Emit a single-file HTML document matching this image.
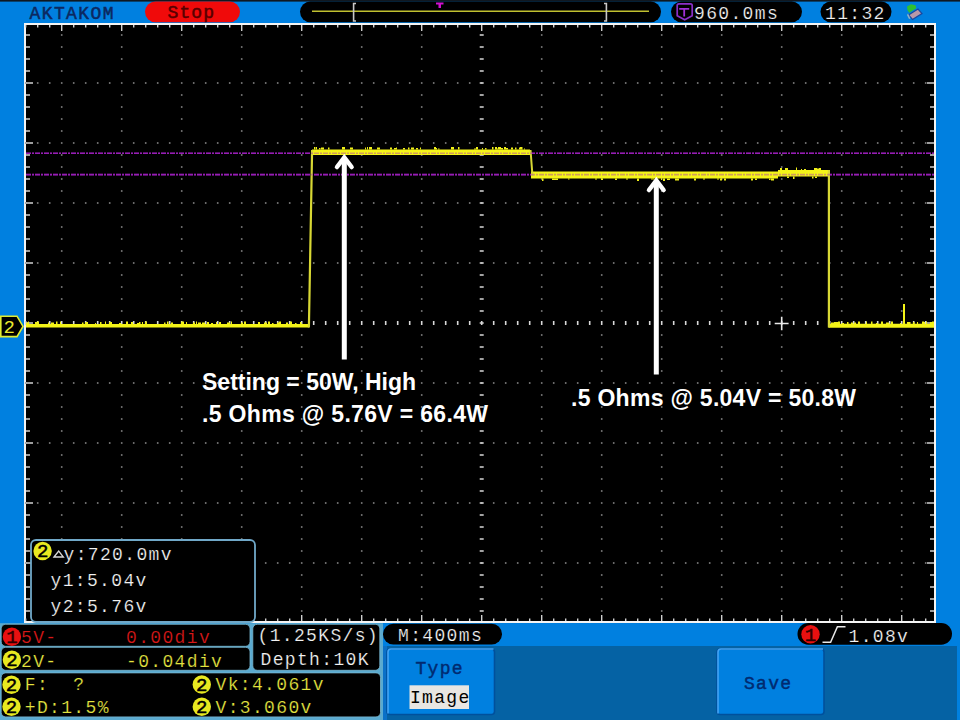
<!DOCTYPE html>
<html><head><meta charset="utf-8">
<style>
html,body{margin:0;padding:0;background:#0080e0;}
body{width:960px;height:720px;overflow:hidden;position:relative;}
svg{position:absolute;left:0;top:0;}
</style></head><body>
<svg width="960" height="720" viewBox="0 0 960 720">
<rect x="0" y="0" width="960" height="720" fill="#0080e0"/>
<rect x="0" y="0" width="960" height="1.6" fill="#101820"/>

<text x="29.5" y="18.75" font-family="Liberation Mono" font-size="18" letter-spacing="1.4" fill="#0c2860" stroke="#0c2860" stroke-width="0.5" xml:space="preserve">AKTAKOM</text>
<rect x="145" y="1.4" width="95" height="20.9" rx="10.45" fill="#f00a0a"/>
<text x="167.5" y="17.8" font-family="Liberation Mono" font-size="18" letter-spacing="1.1" fill="#580000" stroke="#580000" stroke-width="0.5" xml:space="preserve">Stop</text>
<rect x="300" y="1.4" width="361" height="20.9" rx="10.45" fill="#000"/>
<rect x="312" y="10.5" width="337" height="1.5" fill="#c0c030"/>
<path d="M356 3.5h-2.4v17.5h2.4" stroke="#c8c8c8" stroke-width="1.6" fill="none"/>
<path d="M604 3.5h2.4v17.5h-2.4" stroke="#c8c8c8" stroke-width="1.6" fill="none"/>
<path d="M436 2.5h7.5v2h-2.5v3.5h-2.5v-3.5h-2.5z" fill="#d010d0"/>
<rect x="671" y="1.4" width="131" height="20.9" rx="10.45" fill="#000"/>
<path d="M677.2 5.5q0-1.7 1.7-1.7h11.6q1.7 0 1.7 1.7v10.3l-7.5 4l-7.5-4z" fill="none" stroke="#8a30c8" stroke-width="1.7"/>
<path d="M679.2 7.9h10v1.8h-4.1v6.8h-1.8v-6.8h-4.1z" fill="#a030d8"/>
<text x="694" y="18.75" font-family="Liberation Mono" font-size="18" letter-spacing="1.35" fill="#f2f2f2" stroke="#000" stroke-width="0.2" xml:space="preserve">960.0ms</text>
<rect x="820.5" y="1.4" width="71" height="20.9" rx="10.45" fill="#000"/>
<text x="825" y="18.75" font-family="Liberation Mono" font-size="18" letter-spacing="1.35" fill="#f2f2f2" stroke="#000" stroke-width="0.2" xml:space="preserve">11:32</text>
<path d="M908.5 15l9.5-6l4 4.5l-9.5 6z" fill="#b898a8" stroke="#1848a0" stroke-width="1.2"/><path d="M907 6.5l4-2.3l4.5 1l0.8 3l-4 2.5l-3 2l-1.8-2.5z" fill="#30c030"/><path d="M908 13.5l2.5 5l-1.5 0.5l-2-4z" fill="#90b0c8"/>
<rect x="24" y="23" width="912" height="600" fill="#f4f4f4"/>
<rect x="26" y="25" width="908" height="596" fill="#000"/>
<path d="M24.9 82.2h1.6v1.6h-1.6zM36.9 82.2h1.6v1.6h-1.6zM48.9 82.2h1.6v1.6h-1.6zM60.9 82.2h1.6v1.6h-1.6zM72.9 82.2h1.6v1.6h-1.6zM84.9 82.2h1.6v1.6h-1.6zM96.9 82.2h1.6v1.6h-1.6zM108.9 82.2h1.6v1.6h-1.6zM120.9 82.2h1.6v1.6h-1.6zM132.9 82.2h1.6v1.6h-1.6zM144.9 82.2h1.6v1.6h-1.6zM156.9 82.2h1.6v1.6h-1.6zM168.9 82.2h1.6v1.6h-1.6zM180.9 82.2h1.6v1.6h-1.6zM192.9 82.2h1.6v1.6h-1.6zM204.9 82.2h1.6v1.6h-1.6zM216.9 82.2h1.6v1.6h-1.6zM228.9 82.2h1.6v1.6h-1.6zM240.9 82.2h1.6v1.6h-1.6zM252.9 82.2h1.6v1.6h-1.6zM264.9 82.2h1.6v1.6h-1.6zM276.9 82.2h1.6v1.6h-1.6zM288.9 82.2h1.6v1.6h-1.6zM300.9 82.2h1.6v1.6h-1.6zM312.9 82.2h1.6v1.6h-1.6zM324.9 82.2h1.6v1.6h-1.6zM336.9 82.2h1.6v1.6h-1.6zM348.9 82.2h1.6v1.6h-1.6zM360.9 82.2h1.6v1.6h-1.6zM372.9 82.2h1.6v1.6h-1.6zM384.9 82.2h1.6v1.6h-1.6zM396.9 82.2h1.6v1.6h-1.6zM408.9 82.2h1.6v1.6h-1.6zM420.9 82.2h1.6v1.6h-1.6zM432.9 82.2h1.6v1.6h-1.6zM444.9 82.2h1.6v1.6h-1.6zM456.9 82.2h1.6v1.6h-1.6zM468.9 82.2h1.6v1.6h-1.6zM480.9 82.2h1.6v1.6h-1.6zM492.9 82.2h1.6v1.6h-1.6zM504.9 82.2h1.6v1.6h-1.6zM516.9 82.2h1.6v1.6h-1.6zM528.9 82.2h1.6v1.6h-1.6zM540.9 82.2h1.6v1.6h-1.6zM552.9 82.2h1.6v1.6h-1.6zM564.9 82.2h1.6v1.6h-1.6zM576.9 82.2h1.6v1.6h-1.6zM588.9 82.2h1.6v1.6h-1.6zM600.9 82.2h1.6v1.6h-1.6zM612.9 82.2h1.6v1.6h-1.6zM624.9 82.2h1.6v1.6h-1.6zM636.9 82.2h1.6v1.6h-1.6zM648.9 82.2h1.6v1.6h-1.6zM660.9 82.2h1.6v1.6h-1.6zM672.9 82.2h1.6v1.6h-1.6zM684.9 82.2h1.6v1.6h-1.6zM696.9 82.2h1.6v1.6h-1.6zM708.9 82.2h1.6v1.6h-1.6zM720.9 82.2h1.6v1.6h-1.6zM732.9 82.2h1.6v1.6h-1.6zM744.9 82.2h1.6v1.6h-1.6zM756.9 82.2h1.6v1.6h-1.6zM768.9 82.2h1.6v1.6h-1.6zM780.9 82.2h1.6v1.6h-1.6zM792.9 82.2h1.6v1.6h-1.6zM804.9 82.2h1.6v1.6h-1.6zM816.9 82.2h1.6v1.6h-1.6zM828.9 82.2h1.6v1.6h-1.6zM840.9 82.2h1.6v1.6h-1.6zM852.9 82.2h1.6v1.6h-1.6zM864.9 82.2h1.6v1.6h-1.6zM876.9 82.2h1.6v1.6h-1.6zM888.9 82.2h1.6v1.6h-1.6zM900.9 82.2h1.6v1.6h-1.6zM912.9 82.2h1.6v1.6h-1.6zM924.9 82.2h1.6v1.6h-1.6zM24.9 142.2h1.6v1.6h-1.6zM36.9 142.2h1.6v1.6h-1.6zM48.9 142.2h1.6v1.6h-1.6zM60.9 142.2h1.6v1.6h-1.6zM72.9 142.2h1.6v1.6h-1.6zM84.9 142.2h1.6v1.6h-1.6zM96.9 142.2h1.6v1.6h-1.6zM108.9 142.2h1.6v1.6h-1.6zM120.9 142.2h1.6v1.6h-1.6zM132.9 142.2h1.6v1.6h-1.6zM144.9 142.2h1.6v1.6h-1.6zM156.9 142.2h1.6v1.6h-1.6zM168.9 142.2h1.6v1.6h-1.6zM180.9 142.2h1.6v1.6h-1.6zM192.9 142.2h1.6v1.6h-1.6zM204.9 142.2h1.6v1.6h-1.6zM216.9 142.2h1.6v1.6h-1.6zM228.9 142.2h1.6v1.6h-1.6zM240.9 142.2h1.6v1.6h-1.6zM252.9 142.2h1.6v1.6h-1.6zM264.9 142.2h1.6v1.6h-1.6zM276.9 142.2h1.6v1.6h-1.6zM288.9 142.2h1.6v1.6h-1.6zM300.9 142.2h1.6v1.6h-1.6zM312.9 142.2h1.6v1.6h-1.6zM324.9 142.2h1.6v1.6h-1.6zM336.9 142.2h1.6v1.6h-1.6zM348.9 142.2h1.6v1.6h-1.6zM360.9 142.2h1.6v1.6h-1.6zM372.9 142.2h1.6v1.6h-1.6zM384.9 142.2h1.6v1.6h-1.6zM396.9 142.2h1.6v1.6h-1.6zM408.9 142.2h1.6v1.6h-1.6zM420.9 142.2h1.6v1.6h-1.6zM432.9 142.2h1.6v1.6h-1.6zM444.9 142.2h1.6v1.6h-1.6zM456.9 142.2h1.6v1.6h-1.6zM468.9 142.2h1.6v1.6h-1.6zM480.9 142.2h1.6v1.6h-1.6zM492.9 142.2h1.6v1.6h-1.6zM504.9 142.2h1.6v1.6h-1.6zM516.9 142.2h1.6v1.6h-1.6zM528.9 142.2h1.6v1.6h-1.6zM540.9 142.2h1.6v1.6h-1.6zM552.9 142.2h1.6v1.6h-1.6zM564.9 142.2h1.6v1.6h-1.6zM576.9 142.2h1.6v1.6h-1.6zM588.9 142.2h1.6v1.6h-1.6zM600.9 142.2h1.6v1.6h-1.6zM612.9 142.2h1.6v1.6h-1.6zM624.9 142.2h1.6v1.6h-1.6zM636.9 142.2h1.6v1.6h-1.6zM648.9 142.2h1.6v1.6h-1.6zM660.9 142.2h1.6v1.6h-1.6zM672.9 142.2h1.6v1.6h-1.6zM684.9 142.2h1.6v1.6h-1.6zM696.9 142.2h1.6v1.6h-1.6zM708.9 142.2h1.6v1.6h-1.6zM720.9 142.2h1.6v1.6h-1.6zM732.9 142.2h1.6v1.6h-1.6zM744.9 142.2h1.6v1.6h-1.6zM756.9 142.2h1.6v1.6h-1.6zM768.9 142.2h1.6v1.6h-1.6zM780.9 142.2h1.6v1.6h-1.6zM792.9 142.2h1.6v1.6h-1.6zM804.9 142.2h1.6v1.6h-1.6zM816.9 142.2h1.6v1.6h-1.6zM828.9 142.2h1.6v1.6h-1.6zM840.9 142.2h1.6v1.6h-1.6zM852.9 142.2h1.6v1.6h-1.6zM864.9 142.2h1.6v1.6h-1.6zM876.9 142.2h1.6v1.6h-1.6zM888.9 142.2h1.6v1.6h-1.6zM900.9 142.2h1.6v1.6h-1.6zM912.9 142.2h1.6v1.6h-1.6zM924.9 142.2h1.6v1.6h-1.6zM24.9 202.2h1.6v1.6h-1.6zM36.9 202.2h1.6v1.6h-1.6zM48.9 202.2h1.6v1.6h-1.6zM60.9 202.2h1.6v1.6h-1.6zM72.9 202.2h1.6v1.6h-1.6zM84.9 202.2h1.6v1.6h-1.6zM96.9 202.2h1.6v1.6h-1.6zM108.9 202.2h1.6v1.6h-1.6zM120.9 202.2h1.6v1.6h-1.6zM132.9 202.2h1.6v1.6h-1.6zM144.9 202.2h1.6v1.6h-1.6zM156.9 202.2h1.6v1.6h-1.6zM168.9 202.2h1.6v1.6h-1.6zM180.9 202.2h1.6v1.6h-1.6zM192.9 202.2h1.6v1.6h-1.6zM204.9 202.2h1.6v1.6h-1.6zM216.9 202.2h1.6v1.6h-1.6zM228.9 202.2h1.6v1.6h-1.6zM240.9 202.2h1.6v1.6h-1.6zM252.9 202.2h1.6v1.6h-1.6zM264.9 202.2h1.6v1.6h-1.6zM276.9 202.2h1.6v1.6h-1.6zM288.9 202.2h1.6v1.6h-1.6zM300.9 202.2h1.6v1.6h-1.6zM312.9 202.2h1.6v1.6h-1.6zM324.9 202.2h1.6v1.6h-1.6zM336.9 202.2h1.6v1.6h-1.6zM348.9 202.2h1.6v1.6h-1.6zM360.9 202.2h1.6v1.6h-1.6zM372.9 202.2h1.6v1.6h-1.6zM384.9 202.2h1.6v1.6h-1.6zM396.9 202.2h1.6v1.6h-1.6zM408.9 202.2h1.6v1.6h-1.6zM420.9 202.2h1.6v1.6h-1.6zM432.9 202.2h1.6v1.6h-1.6zM444.9 202.2h1.6v1.6h-1.6zM456.9 202.2h1.6v1.6h-1.6zM468.9 202.2h1.6v1.6h-1.6zM480.9 202.2h1.6v1.6h-1.6zM492.9 202.2h1.6v1.6h-1.6zM504.9 202.2h1.6v1.6h-1.6zM516.9 202.2h1.6v1.6h-1.6zM528.9 202.2h1.6v1.6h-1.6zM540.9 202.2h1.6v1.6h-1.6zM552.9 202.2h1.6v1.6h-1.6zM564.9 202.2h1.6v1.6h-1.6zM576.9 202.2h1.6v1.6h-1.6zM588.9 202.2h1.6v1.6h-1.6zM600.9 202.2h1.6v1.6h-1.6zM612.9 202.2h1.6v1.6h-1.6zM624.9 202.2h1.6v1.6h-1.6zM636.9 202.2h1.6v1.6h-1.6zM648.9 202.2h1.6v1.6h-1.6zM660.9 202.2h1.6v1.6h-1.6zM672.9 202.2h1.6v1.6h-1.6zM684.9 202.2h1.6v1.6h-1.6zM696.9 202.2h1.6v1.6h-1.6zM708.9 202.2h1.6v1.6h-1.6zM720.9 202.2h1.6v1.6h-1.6zM732.9 202.2h1.6v1.6h-1.6zM744.9 202.2h1.6v1.6h-1.6zM756.9 202.2h1.6v1.6h-1.6zM768.9 202.2h1.6v1.6h-1.6zM780.9 202.2h1.6v1.6h-1.6zM792.9 202.2h1.6v1.6h-1.6zM804.9 202.2h1.6v1.6h-1.6zM816.9 202.2h1.6v1.6h-1.6zM828.9 202.2h1.6v1.6h-1.6zM840.9 202.2h1.6v1.6h-1.6zM852.9 202.2h1.6v1.6h-1.6zM864.9 202.2h1.6v1.6h-1.6zM876.9 202.2h1.6v1.6h-1.6zM888.9 202.2h1.6v1.6h-1.6zM900.9 202.2h1.6v1.6h-1.6zM912.9 202.2h1.6v1.6h-1.6zM924.9 202.2h1.6v1.6h-1.6zM24.9 262.2h1.6v1.6h-1.6zM36.9 262.2h1.6v1.6h-1.6zM48.9 262.2h1.6v1.6h-1.6zM60.9 262.2h1.6v1.6h-1.6zM72.9 262.2h1.6v1.6h-1.6zM84.9 262.2h1.6v1.6h-1.6zM96.9 262.2h1.6v1.6h-1.6zM108.9 262.2h1.6v1.6h-1.6zM120.9 262.2h1.6v1.6h-1.6zM132.9 262.2h1.6v1.6h-1.6zM144.9 262.2h1.6v1.6h-1.6zM156.9 262.2h1.6v1.6h-1.6zM168.9 262.2h1.6v1.6h-1.6zM180.9 262.2h1.6v1.6h-1.6zM192.9 262.2h1.6v1.6h-1.6zM204.9 262.2h1.6v1.6h-1.6zM216.9 262.2h1.6v1.6h-1.6zM228.9 262.2h1.6v1.6h-1.6zM240.9 262.2h1.6v1.6h-1.6zM252.9 262.2h1.6v1.6h-1.6zM264.9 262.2h1.6v1.6h-1.6zM276.9 262.2h1.6v1.6h-1.6zM288.9 262.2h1.6v1.6h-1.6zM300.9 262.2h1.6v1.6h-1.6zM312.9 262.2h1.6v1.6h-1.6zM324.9 262.2h1.6v1.6h-1.6zM336.9 262.2h1.6v1.6h-1.6zM348.9 262.2h1.6v1.6h-1.6zM360.9 262.2h1.6v1.6h-1.6zM372.9 262.2h1.6v1.6h-1.6zM384.9 262.2h1.6v1.6h-1.6zM396.9 262.2h1.6v1.6h-1.6zM408.9 262.2h1.6v1.6h-1.6zM420.9 262.2h1.6v1.6h-1.6zM432.9 262.2h1.6v1.6h-1.6zM444.9 262.2h1.6v1.6h-1.6zM456.9 262.2h1.6v1.6h-1.6zM468.9 262.2h1.6v1.6h-1.6zM480.9 262.2h1.6v1.6h-1.6zM492.9 262.2h1.6v1.6h-1.6zM504.9 262.2h1.6v1.6h-1.6zM516.9 262.2h1.6v1.6h-1.6zM528.9 262.2h1.6v1.6h-1.6zM540.9 262.2h1.6v1.6h-1.6zM552.9 262.2h1.6v1.6h-1.6zM564.9 262.2h1.6v1.6h-1.6zM576.9 262.2h1.6v1.6h-1.6zM588.9 262.2h1.6v1.6h-1.6zM600.9 262.2h1.6v1.6h-1.6zM612.9 262.2h1.6v1.6h-1.6zM624.9 262.2h1.6v1.6h-1.6zM636.9 262.2h1.6v1.6h-1.6zM648.9 262.2h1.6v1.6h-1.6zM660.9 262.2h1.6v1.6h-1.6zM672.9 262.2h1.6v1.6h-1.6zM684.9 262.2h1.6v1.6h-1.6zM696.9 262.2h1.6v1.6h-1.6zM708.9 262.2h1.6v1.6h-1.6zM720.9 262.2h1.6v1.6h-1.6zM732.9 262.2h1.6v1.6h-1.6zM744.9 262.2h1.6v1.6h-1.6zM756.9 262.2h1.6v1.6h-1.6zM768.9 262.2h1.6v1.6h-1.6zM780.9 262.2h1.6v1.6h-1.6zM792.9 262.2h1.6v1.6h-1.6zM804.9 262.2h1.6v1.6h-1.6zM816.9 262.2h1.6v1.6h-1.6zM828.9 262.2h1.6v1.6h-1.6zM840.9 262.2h1.6v1.6h-1.6zM852.9 262.2h1.6v1.6h-1.6zM864.9 262.2h1.6v1.6h-1.6zM876.9 262.2h1.6v1.6h-1.6zM888.9 262.2h1.6v1.6h-1.6zM900.9 262.2h1.6v1.6h-1.6zM912.9 262.2h1.6v1.6h-1.6zM924.9 262.2h1.6v1.6h-1.6zM24.9 382.2h1.6v1.6h-1.6zM36.9 382.2h1.6v1.6h-1.6zM48.9 382.2h1.6v1.6h-1.6zM60.9 382.2h1.6v1.6h-1.6zM72.9 382.2h1.6v1.6h-1.6zM84.9 382.2h1.6v1.6h-1.6zM96.9 382.2h1.6v1.6h-1.6zM108.9 382.2h1.6v1.6h-1.6zM120.9 382.2h1.6v1.6h-1.6zM132.9 382.2h1.6v1.6h-1.6zM144.9 382.2h1.6v1.6h-1.6zM156.9 382.2h1.6v1.6h-1.6zM168.9 382.2h1.6v1.6h-1.6zM180.9 382.2h1.6v1.6h-1.6zM192.9 382.2h1.6v1.6h-1.6zM204.9 382.2h1.6v1.6h-1.6zM216.9 382.2h1.6v1.6h-1.6zM228.9 382.2h1.6v1.6h-1.6zM240.9 382.2h1.6v1.6h-1.6zM252.9 382.2h1.6v1.6h-1.6zM264.9 382.2h1.6v1.6h-1.6zM276.9 382.2h1.6v1.6h-1.6zM288.9 382.2h1.6v1.6h-1.6zM300.9 382.2h1.6v1.6h-1.6zM312.9 382.2h1.6v1.6h-1.6zM324.9 382.2h1.6v1.6h-1.6zM336.9 382.2h1.6v1.6h-1.6zM348.9 382.2h1.6v1.6h-1.6zM360.9 382.2h1.6v1.6h-1.6zM372.9 382.2h1.6v1.6h-1.6zM384.9 382.2h1.6v1.6h-1.6zM396.9 382.2h1.6v1.6h-1.6zM408.9 382.2h1.6v1.6h-1.6zM420.9 382.2h1.6v1.6h-1.6zM432.9 382.2h1.6v1.6h-1.6zM444.9 382.2h1.6v1.6h-1.6zM456.9 382.2h1.6v1.6h-1.6zM468.9 382.2h1.6v1.6h-1.6zM480.9 382.2h1.6v1.6h-1.6zM492.9 382.2h1.6v1.6h-1.6zM504.9 382.2h1.6v1.6h-1.6zM516.9 382.2h1.6v1.6h-1.6zM528.9 382.2h1.6v1.6h-1.6zM540.9 382.2h1.6v1.6h-1.6zM552.9 382.2h1.6v1.6h-1.6zM564.9 382.2h1.6v1.6h-1.6zM576.9 382.2h1.6v1.6h-1.6zM588.9 382.2h1.6v1.6h-1.6zM600.9 382.2h1.6v1.6h-1.6zM612.9 382.2h1.6v1.6h-1.6zM624.9 382.2h1.6v1.6h-1.6zM636.9 382.2h1.6v1.6h-1.6zM648.9 382.2h1.6v1.6h-1.6zM660.9 382.2h1.6v1.6h-1.6zM672.9 382.2h1.6v1.6h-1.6zM684.9 382.2h1.6v1.6h-1.6zM696.9 382.2h1.6v1.6h-1.6zM708.9 382.2h1.6v1.6h-1.6zM720.9 382.2h1.6v1.6h-1.6zM732.9 382.2h1.6v1.6h-1.6zM744.9 382.2h1.6v1.6h-1.6zM756.9 382.2h1.6v1.6h-1.6zM768.9 382.2h1.6v1.6h-1.6zM780.9 382.2h1.6v1.6h-1.6zM792.9 382.2h1.6v1.6h-1.6zM804.9 382.2h1.6v1.6h-1.6zM816.9 382.2h1.6v1.6h-1.6zM828.9 382.2h1.6v1.6h-1.6zM840.9 382.2h1.6v1.6h-1.6zM852.9 382.2h1.6v1.6h-1.6zM864.9 382.2h1.6v1.6h-1.6zM876.9 382.2h1.6v1.6h-1.6zM888.9 382.2h1.6v1.6h-1.6zM900.9 382.2h1.6v1.6h-1.6zM912.9 382.2h1.6v1.6h-1.6zM924.9 382.2h1.6v1.6h-1.6zM24.9 442.2h1.6v1.6h-1.6zM36.9 442.2h1.6v1.6h-1.6zM48.9 442.2h1.6v1.6h-1.6zM60.9 442.2h1.6v1.6h-1.6zM72.9 442.2h1.6v1.6h-1.6zM84.9 442.2h1.6v1.6h-1.6zM96.9 442.2h1.6v1.6h-1.6zM108.9 442.2h1.6v1.6h-1.6zM120.9 442.2h1.6v1.6h-1.6zM132.9 442.2h1.6v1.6h-1.6zM144.9 442.2h1.6v1.6h-1.6zM156.9 442.2h1.6v1.6h-1.6zM168.9 442.2h1.6v1.6h-1.6zM180.9 442.2h1.6v1.6h-1.6zM192.9 442.2h1.6v1.6h-1.6zM204.9 442.2h1.6v1.6h-1.6zM216.9 442.2h1.6v1.6h-1.6zM228.9 442.2h1.6v1.6h-1.6zM240.9 442.2h1.6v1.6h-1.6zM252.9 442.2h1.6v1.6h-1.6zM264.9 442.2h1.6v1.6h-1.6zM276.9 442.2h1.6v1.6h-1.6zM288.9 442.2h1.6v1.6h-1.6zM300.9 442.2h1.6v1.6h-1.6zM312.9 442.2h1.6v1.6h-1.6zM324.9 442.2h1.6v1.6h-1.6zM336.9 442.2h1.6v1.6h-1.6zM348.9 442.2h1.6v1.6h-1.6zM360.9 442.2h1.6v1.6h-1.6zM372.9 442.2h1.6v1.6h-1.6zM384.9 442.2h1.6v1.6h-1.6zM396.9 442.2h1.6v1.6h-1.6zM408.9 442.2h1.6v1.6h-1.6zM420.9 442.2h1.6v1.6h-1.6zM432.9 442.2h1.6v1.6h-1.6zM444.9 442.2h1.6v1.6h-1.6zM456.9 442.2h1.6v1.6h-1.6zM468.9 442.2h1.6v1.6h-1.6zM480.9 442.2h1.6v1.6h-1.6zM492.9 442.2h1.6v1.6h-1.6zM504.9 442.2h1.6v1.6h-1.6zM516.9 442.2h1.6v1.6h-1.6zM528.9 442.2h1.6v1.6h-1.6zM540.9 442.2h1.6v1.6h-1.6zM552.9 442.2h1.6v1.6h-1.6zM564.9 442.2h1.6v1.6h-1.6zM576.9 442.2h1.6v1.6h-1.6zM588.9 442.2h1.6v1.6h-1.6zM600.9 442.2h1.6v1.6h-1.6zM612.9 442.2h1.6v1.6h-1.6zM624.9 442.2h1.6v1.6h-1.6zM636.9 442.2h1.6v1.6h-1.6zM648.9 442.2h1.6v1.6h-1.6zM660.9 442.2h1.6v1.6h-1.6zM672.9 442.2h1.6v1.6h-1.6zM684.9 442.2h1.6v1.6h-1.6zM696.9 442.2h1.6v1.6h-1.6zM708.9 442.2h1.6v1.6h-1.6zM720.9 442.2h1.6v1.6h-1.6zM732.9 442.2h1.6v1.6h-1.6zM744.9 442.2h1.6v1.6h-1.6zM756.9 442.2h1.6v1.6h-1.6zM768.9 442.2h1.6v1.6h-1.6zM780.9 442.2h1.6v1.6h-1.6zM792.9 442.2h1.6v1.6h-1.6zM804.9 442.2h1.6v1.6h-1.6zM816.9 442.2h1.6v1.6h-1.6zM828.9 442.2h1.6v1.6h-1.6zM840.9 442.2h1.6v1.6h-1.6zM852.9 442.2h1.6v1.6h-1.6zM864.9 442.2h1.6v1.6h-1.6zM876.9 442.2h1.6v1.6h-1.6zM888.9 442.2h1.6v1.6h-1.6zM900.9 442.2h1.6v1.6h-1.6zM912.9 442.2h1.6v1.6h-1.6zM924.9 442.2h1.6v1.6h-1.6zM24.9 502.2h1.6v1.6h-1.6zM36.9 502.2h1.6v1.6h-1.6zM48.9 502.2h1.6v1.6h-1.6zM60.9 502.2h1.6v1.6h-1.6zM72.9 502.2h1.6v1.6h-1.6zM84.9 502.2h1.6v1.6h-1.6zM96.9 502.2h1.6v1.6h-1.6zM108.9 502.2h1.6v1.6h-1.6zM120.9 502.2h1.6v1.6h-1.6zM132.9 502.2h1.6v1.6h-1.6zM144.9 502.2h1.6v1.6h-1.6zM156.9 502.2h1.6v1.6h-1.6zM168.9 502.2h1.6v1.6h-1.6zM180.9 502.2h1.6v1.6h-1.6zM192.9 502.2h1.6v1.6h-1.6zM204.9 502.2h1.6v1.6h-1.6zM216.9 502.2h1.6v1.6h-1.6zM228.9 502.2h1.6v1.6h-1.6zM240.9 502.2h1.6v1.6h-1.6zM252.9 502.2h1.6v1.6h-1.6zM264.9 502.2h1.6v1.6h-1.6zM276.9 502.2h1.6v1.6h-1.6zM288.9 502.2h1.6v1.6h-1.6zM300.9 502.2h1.6v1.6h-1.6zM312.9 502.2h1.6v1.6h-1.6zM324.9 502.2h1.6v1.6h-1.6zM336.9 502.2h1.6v1.6h-1.6zM348.9 502.2h1.6v1.6h-1.6zM360.9 502.2h1.6v1.6h-1.6zM372.9 502.2h1.6v1.6h-1.6zM384.9 502.2h1.6v1.6h-1.6zM396.9 502.2h1.6v1.6h-1.6zM408.9 502.2h1.6v1.6h-1.6zM420.9 502.2h1.6v1.6h-1.6zM432.9 502.2h1.6v1.6h-1.6zM444.9 502.2h1.6v1.6h-1.6zM456.9 502.2h1.6v1.6h-1.6zM468.9 502.2h1.6v1.6h-1.6zM480.9 502.2h1.6v1.6h-1.6zM492.9 502.2h1.6v1.6h-1.6zM504.9 502.2h1.6v1.6h-1.6zM516.9 502.2h1.6v1.6h-1.6zM528.9 502.2h1.6v1.6h-1.6zM540.9 502.2h1.6v1.6h-1.6zM552.9 502.2h1.6v1.6h-1.6zM564.9 502.2h1.6v1.6h-1.6zM576.9 502.2h1.6v1.6h-1.6zM588.9 502.2h1.6v1.6h-1.6zM600.9 502.2h1.6v1.6h-1.6zM612.9 502.2h1.6v1.6h-1.6zM624.9 502.2h1.6v1.6h-1.6zM636.9 502.2h1.6v1.6h-1.6zM648.9 502.2h1.6v1.6h-1.6zM660.9 502.2h1.6v1.6h-1.6zM672.9 502.2h1.6v1.6h-1.6zM684.9 502.2h1.6v1.6h-1.6zM696.9 502.2h1.6v1.6h-1.6zM708.9 502.2h1.6v1.6h-1.6zM720.9 502.2h1.6v1.6h-1.6zM732.9 502.2h1.6v1.6h-1.6zM744.9 502.2h1.6v1.6h-1.6zM756.9 502.2h1.6v1.6h-1.6zM768.9 502.2h1.6v1.6h-1.6zM780.9 502.2h1.6v1.6h-1.6zM792.9 502.2h1.6v1.6h-1.6zM804.9 502.2h1.6v1.6h-1.6zM816.9 502.2h1.6v1.6h-1.6zM828.9 502.2h1.6v1.6h-1.6zM840.9 502.2h1.6v1.6h-1.6zM852.9 502.2h1.6v1.6h-1.6zM864.9 502.2h1.6v1.6h-1.6zM876.9 502.2h1.6v1.6h-1.6zM888.9 502.2h1.6v1.6h-1.6zM900.9 502.2h1.6v1.6h-1.6zM912.9 502.2h1.6v1.6h-1.6zM924.9 502.2h1.6v1.6h-1.6zM24.9 562.2h1.6v1.6h-1.6zM36.9 562.2h1.6v1.6h-1.6zM48.9 562.2h1.6v1.6h-1.6zM60.9 562.2h1.6v1.6h-1.6zM72.9 562.2h1.6v1.6h-1.6zM84.9 562.2h1.6v1.6h-1.6zM96.9 562.2h1.6v1.6h-1.6zM108.9 562.2h1.6v1.6h-1.6zM120.9 562.2h1.6v1.6h-1.6zM132.9 562.2h1.6v1.6h-1.6zM144.9 562.2h1.6v1.6h-1.6zM156.9 562.2h1.6v1.6h-1.6zM168.9 562.2h1.6v1.6h-1.6zM180.9 562.2h1.6v1.6h-1.6zM192.9 562.2h1.6v1.6h-1.6zM204.9 562.2h1.6v1.6h-1.6zM216.9 562.2h1.6v1.6h-1.6zM228.9 562.2h1.6v1.6h-1.6zM240.9 562.2h1.6v1.6h-1.6zM252.9 562.2h1.6v1.6h-1.6zM264.9 562.2h1.6v1.6h-1.6zM276.9 562.2h1.6v1.6h-1.6zM288.9 562.2h1.6v1.6h-1.6zM300.9 562.2h1.6v1.6h-1.6zM312.9 562.2h1.6v1.6h-1.6zM324.9 562.2h1.6v1.6h-1.6zM336.9 562.2h1.6v1.6h-1.6zM348.9 562.2h1.6v1.6h-1.6zM360.9 562.2h1.6v1.6h-1.6zM372.9 562.2h1.6v1.6h-1.6zM384.9 562.2h1.6v1.6h-1.6zM396.9 562.2h1.6v1.6h-1.6zM408.9 562.2h1.6v1.6h-1.6zM420.9 562.2h1.6v1.6h-1.6zM432.9 562.2h1.6v1.6h-1.6zM444.9 562.2h1.6v1.6h-1.6zM456.9 562.2h1.6v1.6h-1.6zM468.9 562.2h1.6v1.6h-1.6zM480.9 562.2h1.6v1.6h-1.6zM492.9 562.2h1.6v1.6h-1.6zM504.9 562.2h1.6v1.6h-1.6zM516.9 562.2h1.6v1.6h-1.6zM528.9 562.2h1.6v1.6h-1.6zM540.9 562.2h1.6v1.6h-1.6zM552.9 562.2h1.6v1.6h-1.6zM564.9 562.2h1.6v1.6h-1.6zM576.9 562.2h1.6v1.6h-1.6zM588.9 562.2h1.6v1.6h-1.6zM600.9 562.2h1.6v1.6h-1.6zM612.9 562.2h1.6v1.6h-1.6zM624.9 562.2h1.6v1.6h-1.6zM636.9 562.2h1.6v1.6h-1.6zM648.9 562.2h1.6v1.6h-1.6zM660.9 562.2h1.6v1.6h-1.6zM672.9 562.2h1.6v1.6h-1.6zM684.9 562.2h1.6v1.6h-1.6zM696.9 562.2h1.6v1.6h-1.6zM708.9 562.2h1.6v1.6h-1.6zM720.9 562.2h1.6v1.6h-1.6zM732.9 562.2h1.6v1.6h-1.6zM744.9 562.2h1.6v1.6h-1.6zM756.9 562.2h1.6v1.6h-1.6zM768.9 562.2h1.6v1.6h-1.6zM780.9 562.2h1.6v1.6h-1.6zM792.9 562.2h1.6v1.6h-1.6zM804.9 562.2h1.6v1.6h-1.6zM816.9 562.2h1.6v1.6h-1.6zM828.9 562.2h1.6v1.6h-1.6zM840.9 562.2h1.6v1.6h-1.6zM852.9 562.2h1.6v1.6h-1.6zM864.9 562.2h1.6v1.6h-1.6zM876.9 562.2h1.6v1.6h-1.6zM888.9 562.2h1.6v1.6h-1.6zM900.9 562.2h1.6v1.6h-1.6zM912.9 562.2h1.6v1.6h-1.6zM924.9 562.2h1.6v1.6h-1.6zM60.9 34.2h1.6v1.6h-1.6zM60.9 46.2h1.6v1.6h-1.6zM60.9 58.2h1.6v1.6h-1.6zM60.9 70.2h1.6v1.6h-1.6zM60.9 94.2h1.6v1.6h-1.6zM60.9 106.2h1.6v1.6h-1.6zM60.9 118.2h1.6v1.6h-1.6zM60.9 130.2h1.6v1.6h-1.6zM60.9 154.2h1.6v1.6h-1.6zM60.9 166.2h1.6v1.6h-1.6zM60.9 178.2h1.6v1.6h-1.6zM60.9 190.2h1.6v1.6h-1.6zM60.9 214.2h1.6v1.6h-1.6zM60.9 226.2h1.6v1.6h-1.6zM60.9 238.2h1.6v1.6h-1.6zM60.9 250.2h1.6v1.6h-1.6zM60.9 274.2h1.6v1.6h-1.6zM60.9 286.2h1.6v1.6h-1.6zM60.9 298.2h1.6v1.6h-1.6zM60.9 310.2h1.6v1.6h-1.6zM60.9 334.2h1.6v1.6h-1.6zM60.9 346.2h1.6v1.6h-1.6zM60.9 358.2h1.6v1.6h-1.6zM60.9 370.2h1.6v1.6h-1.6zM60.9 394.2h1.6v1.6h-1.6zM60.9 406.2h1.6v1.6h-1.6zM60.9 418.2h1.6v1.6h-1.6zM60.9 430.2h1.6v1.6h-1.6zM60.9 454.2h1.6v1.6h-1.6zM60.9 466.2h1.6v1.6h-1.6zM60.9 478.2h1.6v1.6h-1.6zM60.9 490.2h1.6v1.6h-1.6zM60.9 514.2h1.6v1.6h-1.6zM60.9 526.2h1.6v1.6h-1.6zM60.9 538.2h1.6v1.6h-1.6zM60.9 550.2h1.6v1.6h-1.6zM60.9 574.2h1.6v1.6h-1.6zM60.9 586.2h1.6v1.6h-1.6zM60.9 598.2h1.6v1.6h-1.6zM60.9 610.2h1.6v1.6h-1.6zM120.9 34.2h1.6v1.6h-1.6zM120.9 46.2h1.6v1.6h-1.6zM120.9 58.2h1.6v1.6h-1.6zM120.9 70.2h1.6v1.6h-1.6zM120.9 94.2h1.6v1.6h-1.6zM120.9 106.2h1.6v1.6h-1.6zM120.9 118.2h1.6v1.6h-1.6zM120.9 130.2h1.6v1.6h-1.6zM120.9 154.2h1.6v1.6h-1.6zM120.9 166.2h1.6v1.6h-1.6zM120.9 178.2h1.6v1.6h-1.6zM120.9 190.2h1.6v1.6h-1.6zM120.9 214.2h1.6v1.6h-1.6zM120.9 226.2h1.6v1.6h-1.6zM120.9 238.2h1.6v1.6h-1.6zM120.9 250.2h1.6v1.6h-1.6zM120.9 274.2h1.6v1.6h-1.6zM120.9 286.2h1.6v1.6h-1.6zM120.9 298.2h1.6v1.6h-1.6zM120.9 310.2h1.6v1.6h-1.6zM120.9 334.2h1.6v1.6h-1.6zM120.9 346.2h1.6v1.6h-1.6zM120.9 358.2h1.6v1.6h-1.6zM120.9 370.2h1.6v1.6h-1.6zM120.9 394.2h1.6v1.6h-1.6zM120.9 406.2h1.6v1.6h-1.6zM120.9 418.2h1.6v1.6h-1.6zM120.9 430.2h1.6v1.6h-1.6zM120.9 454.2h1.6v1.6h-1.6zM120.9 466.2h1.6v1.6h-1.6zM120.9 478.2h1.6v1.6h-1.6zM120.9 490.2h1.6v1.6h-1.6zM120.9 514.2h1.6v1.6h-1.6zM120.9 526.2h1.6v1.6h-1.6zM120.9 538.2h1.6v1.6h-1.6zM120.9 550.2h1.6v1.6h-1.6zM120.9 574.2h1.6v1.6h-1.6zM120.9 586.2h1.6v1.6h-1.6zM120.9 598.2h1.6v1.6h-1.6zM120.9 610.2h1.6v1.6h-1.6zM180.9 34.2h1.6v1.6h-1.6zM180.9 46.2h1.6v1.6h-1.6zM180.9 58.2h1.6v1.6h-1.6zM180.9 70.2h1.6v1.6h-1.6zM180.9 94.2h1.6v1.6h-1.6zM180.9 106.2h1.6v1.6h-1.6zM180.9 118.2h1.6v1.6h-1.6zM180.9 130.2h1.6v1.6h-1.6zM180.9 154.2h1.6v1.6h-1.6zM180.9 166.2h1.6v1.6h-1.6zM180.9 178.2h1.6v1.6h-1.6zM180.9 190.2h1.6v1.6h-1.6zM180.9 214.2h1.6v1.6h-1.6zM180.9 226.2h1.6v1.6h-1.6zM180.9 238.2h1.6v1.6h-1.6zM180.9 250.2h1.6v1.6h-1.6zM180.9 274.2h1.6v1.6h-1.6zM180.9 286.2h1.6v1.6h-1.6zM180.9 298.2h1.6v1.6h-1.6zM180.9 310.2h1.6v1.6h-1.6zM180.9 334.2h1.6v1.6h-1.6zM180.9 346.2h1.6v1.6h-1.6zM180.9 358.2h1.6v1.6h-1.6zM180.9 370.2h1.6v1.6h-1.6zM180.9 394.2h1.6v1.6h-1.6zM180.9 406.2h1.6v1.6h-1.6zM180.9 418.2h1.6v1.6h-1.6zM180.9 430.2h1.6v1.6h-1.6zM180.9 454.2h1.6v1.6h-1.6zM180.9 466.2h1.6v1.6h-1.6zM180.9 478.2h1.6v1.6h-1.6zM180.9 490.2h1.6v1.6h-1.6zM180.9 514.2h1.6v1.6h-1.6zM180.9 526.2h1.6v1.6h-1.6zM180.9 538.2h1.6v1.6h-1.6zM180.9 550.2h1.6v1.6h-1.6zM180.9 574.2h1.6v1.6h-1.6zM180.9 586.2h1.6v1.6h-1.6zM180.9 598.2h1.6v1.6h-1.6zM180.9 610.2h1.6v1.6h-1.6zM240.9 34.2h1.6v1.6h-1.6zM240.9 46.2h1.6v1.6h-1.6zM240.9 58.2h1.6v1.6h-1.6zM240.9 70.2h1.6v1.6h-1.6zM240.9 94.2h1.6v1.6h-1.6zM240.9 106.2h1.6v1.6h-1.6zM240.9 118.2h1.6v1.6h-1.6zM240.9 130.2h1.6v1.6h-1.6zM240.9 154.2h1.6v1.6h-1.6zM240.9 166.2h1.6v1.6h-1.6zM240.9 178.2h1.6v1.6h-1.6zM240.9 190.2h1.6v1.6h-1.6zM240.9 214.2h1.6v1.6h-1.6zM240.9 226.2h1.6v1.6h-1.6zM240.9 238.2h1.6v1.6h-1.6zM240.9 250.2h1.6v1.6h-1.6zM240.9 274.2h1.6v1.6h-1.6zM240.9 286.2h1.6v1.6h-1.6zM240.9 298.2h1.6v1.6h-1.6zM240.9 310.2h1.6v1.6h-1.6zM240.9 334.2h1.6v1.6h-1.6zM240.9 346.2h1.6v1.6h-1.6zM240.9 358.2h1.6v1.6h-1.6zM240.9 370.2h1.6v1.6h-1.6zM240.9 394.2h1.6v1.6h-1.6zM240.9 406.2h1.6v1.6h-1.6zM240.9 418.2h1.6v1.6h-1.6zM240.9 430.2h1.6v1.6h-1.6zM240.9 454.2h1.6v1.6h-1.6zM240.9 466.2h1.6v1.6h-1.6zM240.9 478.2h1.6v1.6h-1.6zM240.9 490.2h1.6v1.6h-1.6zM240.9 514.2h1.6v1.6h-1.6zM240.9 526.2h1.6v1.6h-1.6zM240.9 538.2h1.6v1.6h-1.6zM240.9 550.2h1.6v1.6h-1.6zM240.9 574.2h1.6v1.6h-1.6zM240.9 586.2h1.6v1.6h-1.6zM240.9 598.2h1.6v1.6h-1.6zM240.9 610.2h1.6v1.6h-1.6zM300.9 34.2h1.6v1.6h-1.6zM300.9 46.2h1.6v1.6h-1.6zM300.9 58.2h1.6v1.6h-1.6zM300.9 70.2h1.6v1.6h-1.6zM300.9 94.2h1.6v1.6h-1.6zM300.9 106.2h1.6v1.6h-1.6zM300.9 118.2h1.6v1.6h-1.6zM300.9 130.2h1.6v1.6h-1.6zM300.9 154.2h1.6v1.6h-1.6zM300.9 166.2h1.6v1.6h-1.6zM300.9 178.2h1.6v1.6h-1.6zM300.9 190.2h1.6v1.6h-1.6zM300.9 214.2h1.6v1.6h-1.6zM300.9 226.2h1.6v1.6h-1.6zM300.9 238.2h1.6v1.6h-1.6zM300.9 250.2h1.6v1.6h-1.6zM300.9 274.2h1.6v1.6h-1.6zM300.9 286.2h1.6v1.6h-1.6zM300.9 298.2h1.6v1.6h-1.6zM300.9 310.2h1.6v1.6h-1.6zM300.9 334.2h1.6v1.6h-1.6zM300.9 346.2h1.6v1.6h-1.6zM300.9 358.2h1.6v1.6h-1.6zM300.9 370.2h1.6v1.6h-1.6zM300.9 394.2h1.6v1.6h-1.6zM300.9 406.2h1.6v1.6h-1.6zM300.9 418.2h1.6v1.6h-1.6zM300.9 430.2h1.6v1.6h-1.6zM300.9 454.2h1.6v1.6h-1.6zM300.9 466.2h1.6v1.6h-1.6zM300.9 478.2h1.6v1.6h-1.6zM300.9 490.2h1.6v1.6h-1.6zM300.9 514.2h1.6v1.6h-1.6zM300.9 526.2h1.6v1.6h-1.6zM300.9 538.2h1.6v1.6h-1.6zM300.9 550.2h1.6v1.6h-1.6zM300.9 574.2h1.6v1.6h-1.6zM300.9 586.2h1.6v1.6h-1.6zM300.9 598.2h1.6v1.6h-1.6zM300.9 610.2h1.6v1.6h-1.6zM360.9 34.2h1.6v1.6h-1.6zM360.9 46.2h1.6v1.6h-1.6zM360.9 58.2h1.6v1.6h-1.6zM360.9 70.2h1.6v1.6h-1.6zM360.9 94.2h1.6v1.6h-1.6zM360.9 106.2h1.6v1.6h-1.6zM360.9 118.2h1.6v1.6h-1.6zM360.9 130.2h1.6v1.6h-1.6zM360.9 154.2h1.6v1.6h-1.6zM360.9 166.2h1.6v1.6h-1.6zM360.9 178.2h1.6v1.6h-1.6zM360.9 190.2h1.6v1.6h-1.6zM360.9 214.2h1.6v1.6h-1.6zM360.9 226.2h1.6v1.6h-1.6zM360.9 238.2h1.6v1.6h-1.6zM360.9 250.2h1.6v1.6h-1.6zM360.9 274.2h1.6v1.6h-1.6zM360.9 286.2h1.6v1.6h-1.6zM360.9 298.2h1.6v1.6h-1.6zM360.9 310.2h1.6v1.6h-1.6zM360.9 334.2h1.6v1.6h-1.6zM360.9 346.2h1.6v1.6h-1.6zM360.9 358.2h1.6v1.6h-1.6zM360.9 370.2h1.6v1.6h-1.6zM360.9 394.2h1.6v1.6h-1.6zM360.9 406.2h1.6v1.6h-1.6zM360.9 418.2h1.6v1.6h-1.6zM360.9 430.2h1.6v1.6h-1.6zM360.9 454.2h1.6v1.6h-1.6zM360.9 466.2h1.6v1.6h-1.6zM360.9 478.2h1.6v1.6h-1.6zM360.9 490.2h1.6v1.6h-1.6zM360.9 514.2h1.6v1.6h-1.6zM360.9 526.2h1.6v1.6h-1.6zM360.9 538.2h1.6v1.6h-1.6zM360.9 550.2h1.6v1.6h-1.6zM360.9 574.2h1.6v1.6h-1.6zM360.9 586.2h1.6v1.6h-1.6zM360.9 598.2h1.6v1.6h-1.6zM360.9 610.2h1.6v1.6h-1.6zM420.9 34.2h1.6v1.6h-1.6zM420.9 46.2h1.6v1.6h-1.6zM420.9 58.2h1.6v1.6h-1.6zM420.9 70.2h1.6v1.6h-1.6zM420.9 94.2h1.6v1.6h-1.6zM420.9 106.2h1.6v1.6h-1.6zM420.9 118.2h1.6v1.6h-1.6zM420.9 130.2h1.6v1.6h-1.6zM420.9 154.2h1.6v1.6h-1.6zM420.9 166.2h1.6v1.6h-1.6zM420.9 178.2h1.6v1.6h-1.6zM420.9 190.2h1.6v1.6h-1.6zM420.9 214.2h1.6v1.6h-1.6zM420.9 226.2h1.6v1.6h-1.6zM420.9 238.2h1.6v1.6h-1.6zM420.9 250.2h1.6v1.6h-1.6zM420.9 274.2h1.6v1.6h-1.6zM420.9 286.2h1.6v1.6h-1.6zM420.9 298.2h1.6v1.6h-1.6zM420.9 310.2h1.6v1.6h-1.6zM420.9 334.2h1.6v1.6h-1.6zM420.9 346.2h1.6v1.6h-1.6zM420.9 358.2h1.6v1.6h-1.6zM420.9 370.2h1.6v1.6h-1.6zM420.9 394.2h1.6v1.6h-1.6zM420.9 406.2h1.6v1.6h-1.6zM420.9 418.2h1.6v1.6h-1.6zM420.9 430.2h1.6v1.6h-1.6zM420.9 454.2h1.6v1.6h-1.6zM420.9 466.2h1.6v1.6h-1.6zM420.9 478.2h1.6v1.6h-1.6zM420.9 490.2h1.6v1.6h-1.6zM420.9 514.2h1.6v1.6h-1.6zM420.9 526.2h1.6v1.6h-1.6zM420.9 538.2h1.6v1.6h-1.6zM420.9 550.2h1.6v1.6h-1.6zM420.9 574.2h1.6v1.6h-1.6zM420.9 586.2h1.6v1.6h-1.6zM420.9 598.2h1.6v1.6h-1.6zM420.9 610.2h1.6v1.6h-1.6zM540.9 34.2h1.6v1.6h-1.6zM540.9 46.2h1.6v1.6h-1.6zM540.9 58.2h1.6v1.6h-1.6zM540.9 70.2h1.6v1.6h-1.6zM540.9 94.2h1.6v1.6h-1.6zM540.9 106.2h1.6v1.6h-1.6zM540.9 118.2h1.6v1.6h-1.6zM540.9 130.2h1.6v1.6h-1.6zM540.9 154.2h1.6v1.6h-1.6zM540.9 166.2h1.6v1.6h-1.6zM540.9 178.2h1.6v1.6h-1.6zM540.9 190.2h1.6v1.6h-1.6zM540.9 214.2h1.6v1.6h-1.6zM540.9 226.2h1.6v1.6h-1.6zM540.9 238.2h1.6v1.6h-1.6zM540.9 250.2h1.6v1.6h-1.6zM540.9 274.2h1.6v1.6h-1.6zM540.9 286.2h1.6v1.6h-1.6zM540.9 298.2h1.6v1.6h-1.6zM540.9 310.2h1.6v1.6h-1.6zM540.9 334.2h1.6v1.6h-1.6zM540.9 346.2h1.6v1.6h-1.6zM540.9 358.2h1.6v1.6h-1.6zM540.9 370.2h1.6v1.6h-1.6zM540.9 394.2h1.6v1.6h-1.6zM540.9 406.2h1.6v1.6h-1.6zM540.9 418.2h1.6v1.6h-1.6zM540.9 430.2h1.6v1.6h-1.6zM540.9 454.2h1.6v1.6h-1.6zM540.9 466.2h1.6v1.6h-1.6zM540.9 478.2h1.6v1.6h-1.6zM540.9 490.2h1.6v1.6h-1.6zM540.9 514.2h1.6v1.6h-1.6zM540.9 526.2h1.6v1.6h-1.6zM540.9 538.2h1.6v1.6h-1.6zM540.9 550.2h1.6v1.6h-1.6zM540.9 574.2h1.6v1.6h-1.6zM540.9 586.2h1.6v1.6h-1.6zM540.9 598.2h1.6v1.6h-1.6zM540.9 610.2h1.6v1.6h-1.6zM600.9 34.2h1.6v1.6h-1.6zM600.9 46.2h1.6v1.6h-1.6zM600.9 58.2h1.6v1.6h-1.6zM600.9 70.2h1.6v1.6h-1.6zM600.9 94.2h1.6v1.6h-1.6zM600.9 106.2h1.6v1.6h-1.6zM600.9 118.2h1.6v1.6h-1.6zM600.9 130.2h1.6v1.6h-1.6zM600.9 154.2h1.6v1.6h-1.6zM600.9 166.2h1.6v1.6h-1.6zM600.9 178.2h1.6v1.6h-1.6zM600.9 190.2h1.6v1.6h-1.6zM600.9 214.2h1.6v1.6h-1.6zM600.9 226.2h1.6v1.6h-1.6zM600.9 238.2h1.6v1.6h-1.6zM600.9 250.2h1.6v1.6h-1.6zM600.9 274.2h1.6v1.6h-1.6zM600.9 286.2h1.6v1.6h-1.6zM600.9 298.2h1.6v1.6h-1.6zM600.9 310.2h1.6v1.6h-1.6zM600.9 334.2h1.6v1.6h-1.6zM600.9 346.2h1.6v1.6h-1.6zM600.9 358.2h1.6v1.6h-1.6zM600.9 370.2h1.6v1.6h-1.6zM600.9 394.2h1.6v1.6h-1.6zM600.9 406.2h1.6v1.6h-1.6zM600.9 418.2h1.6v1.6h-1.6zM600.9 430.2h1.6v1.6h-1.6zM600.9 454.2h1.6v1.6h-1.6zM600.9 466.2h1.6v1.6h-1.6zM600.9 478.2h1.6v1.6h-1.6zM600.9 490.2h1.6v1.6h-1.6zM600.9 514.2h1.6v1.6h-1.6zM600.9 526.2h1.6v1.6h-1.6zM600.9 538.2h1.6v1.6h-1.6zM600.9 550.2h1.6v1.6h-1.6zM600.9 574.2h1.6v1.6h-1.6zM600.9 586.2h1.6v1.6h-1.6zM600.9 598.2h1.6v1.6h-1.6zM600.9 610.2h1.6v1.6h-1.6zM660.9 34.2h1.6v1.6h-1.6zM660.9 46.2h1.6v1.6h-1.6zM660.9 58.2h1.6v1.6h-1.6zM660.9 70.2h1.6v1.6h-1.6zM660.9 94.2h1.6v1.6h-1.6zM660.9 106.2h1.6v1.6h-1.6zM660.9 118.2h1.6v1.6h-1.6zM660.9 130.2h1.6v1.6h-1.6zM660.9 154.2h1.6v1.6h-1.6zM660.9 166.2h1.6v1.6h-1.6zM660.9 178.2h1.6v1.6h-1.6zM660.9 190.2h1.6v1.6h-1.6zM660.9 214.2h1.6v1.6h-1.6zM660.9 226.2h1.6v1.6h-1.6zM660.9 238.2h1.6v1.6h-1.6zM660.9 250.2h1.6v1.6h-1.6zM660.9 274.2h1.6v1.6h-1.6zM660.9 286.2h1.6v1.6h-1.6zM660.9 298.2h1.6v1.6h-1.6zM660.9 310.2h1.6v1.6h-1.6zM660.9 334.2h1.6v1.6h-1.6zM660.9 346.2h1.6v1.6h-1.6zM660.9 358.2h1.6v1.6h-1.6zM660.9 370.2h1.6v1.6h-1.6zM660.9 394.2h1.6v1.6h-1.6zM660.9 406.2h1.6v1.6h-1.6zM660.9 418.2h1.6v1.6h-1.6zM660.9 430.2h1.6v1.6h-1.6zM660.9 454.2h1.6v1.6h-1.6zM660.9 466.2h1.6v1.6h-1.6zM660.9 478.2h1.6v1.6h-1.6zM660.9 490.2h1.6v1.6h-1.6zM660.9 514.2h1.6v1.6h-1.6zM660.9 526.2h1.6v1.6h-1.6zM660.9 538.2h1.6v1.6h-1.6zM660.9 550.2h1.6v1.6h-1.6zM660.9 574.2h1.6v1.6h-1.6zM660.9 586.2h1.6v1.6h-1.6zM660.9 598.2h1.6v1.6h-1.6zM660.9 610.2h1.6v1.6h-1.6zM720.9 34.2h1.6v1.6h-1.6zM720.9 46.2h1.6v1.6h-1.6zM720.9 58.2h1.6v1.6h-1.6zM720.9 70.2h1.6v1.6h-1.6zM720.9 94.2h1.6v1.6h-1.6zM720.9 106.2h1.6v1.6h-1.6zM720.9 118.2h1.6v1.6h-1.6zM720.9 130.2h1.6v1.6h-1.6zM720.9 154.2h1.6v1.6h-1.6zM720.9 166.2h1.6v1.6h-1.6zM720.9 178.2h1.6v1.6h-1.6zM720.9 190.2h1.6v1.6h-1.6zM720.9 214.2h1.6v1.6h-1.6zM720.9 226.2h1.6v1.6h-1.6zM720.9 238.2h1.6v1.6h-1.6zM720.9 250.2h1.6v1.6h-1.6zM720.9 274.2h1.6v1.6h-1.6zM720.9 286.2h1.6v1.6h-1.6zM720.9 298.2h1.6v1.6h-1.6zM720.9 310.2h1.6v1.6h-1.6zM720.9 334.2h1.6v1.6h-1.6zM720.9 346.2h1.6v1.6h-1.6zM720.9 358.2h1.6v1.6h-1.6zM720.9 370.2h1.6v1.6h-1.6zM720.9 394.2h1.6v1.6h-1.6zM720.9 406.2h1.6v1.6h-1.6zM720.9 418.2h1.6v1.6h-1.6zM720.9 430.2h1.6v1.6h-1.6zM720.9 454.2h1.6v1.6h-1.6zM720.9 466.2h1.6v1.6h-1.6zM720.9 478.2h1.6v1.6h-1.6zM720.9 490.2h1.6v1.6h-1.6zM720.9 514.2h1.6v1.6h-1.6zM720.9 526.2h1.6v1.6h-1.6zM720.9 538.2h1.6v1.6h-1.6zM720.9 550.2h1.6v1.6h-1.6zM720.9 574.2h1.6v1.6h-1.6zM720.9 586.2h1.6v1.6h-1.6zM720.9 598.2h1.6v1.6h-1.6zM720.9 610.2h1.6v1.6h-1.6zM780.9 34.2h1.6v1.6h-1.6zM780.9 46.2h1.6v1.6h-1.6zM780.9 58.2h1.6v1.6h-1.6zM780.9 70.2h1.6v1.6h-1.6zM780.9 94.2h1.6v1.6h-1.6zM780.9 106.2h1.6v1.6h-1.6zM780.9 118.2h1.6v1.6h-1.6zM780.9 130.2h1.6v1.6h-1.6zM780.9 154.2h1.6v1.6h-1.6zM780.9 166.2h1.6v1.6h-1.6zM780.9 178.2h1.6v1.6h-1.6zM780.9 190.2h1.6v1.6h-1.6zM780.9 214.2h1.6v1.6h-1.6zM780.9 226.2h1.6v1.6h-1.6zM780.9 238.2h1.6v1.6h-1.6zM780.9 250.2h1.6v1.6h-1.6zM780.9 274.2h1.6v1.6h-1.6zM780.9 286.2h1.6v1.6h-1.6zM780.9 298.2h1.6v1.6h-1.6zM780.9 310.2h1.6v1.6h-1.6zM780.9 334.2h1.6v1.6h-1.6zM780.9 346.2h1.6v1.6h-1.6zM780.9 358.2h1.6v1.6h-1.6zM780.9 370.2h1.6v1.6h-1.6zM780.9 394.2h1.6v1.6h-1.6zM780.9 406.2h1.6v1.6h-1.6zM780.9 418.2h1.6v1.6h-1.6zM780.9 430.2h1.6v1.6h-1.6zM780.9 454.2h1.6v1.6h-1.6zM780.9 466.2h1.6v1.6h-1.6zM780.9 478.2h1.6v1.6h-1.6zM780.9 490.2h1.6v1.6h-1.6zM780.9 514.2h1.6v1.6h-1.6zM780.9 526.2h1.6v1.6h-1.6zM780.9 538.2h1.6v1.6h-1.6zM780.9 550.2h1.6v1.6h-1.6zM780.9 574.2h1.6v1.6h-1.6zM780.9 586.2h1.6v1.6h-1.6zM780.9 598.2h1.6v1.6h-1.6zM780.9 610.2h1.6v1.6h-1.6zM840.9 34.2h1.6v1.6h-1.6zM840.9 46.2h1.6v1.6h-1.6zM840.9 58.2h1.6v1.6h-1.6zM840.9 70.2h1.6v1.6h-1.6zM840.9 94.2h1.6v1.6h-1.6zM840.9 106.2h1.6v1.6h-1.6zM840.9 118.2h1.6v1.6h-1.6zM840.9 130.2h1.6v1.6h-1.6zM840.9 154.2h1.6v1.6h-1.6zM840.9 166.2h1.6v1.6h-1.6zM840.9 178.2h1.6v1.6h-1.6zM840.9 190.2h1.6v1.6h-1.6zM840.9 214.2h1.6v1.6h-1.6zM840.9 226.2h1.6v1.6h-1.6zM840.9 238.2h1.6v1.6h-1.6zM840.9 250.2h1.6v1.6h-1.6zM840.9 274.2h1.6v1.6h-1.6zM840.9 286.2h1.6v1.6h-1.6zM840.9 298.2h1.6v1.6h-1.6zM840.9 310.2h1.6v1.6h-1.6zM840.9 334.2h1.6v1.6h-1.6zM840.9 346.2h1.6v1.6h-1.6zM840.9 358.2h1.6v1.6h-1.6zM840.9 370.2h1.6v1.6h-1.6zM840.9 394.2h1.6v1.6h-1.6zM840.9 406.2h1.6v1.6h-1.6zM840.9 418.2h1.6v1.6h-1.6zM840.9 430.2h1.6v1.6h-1.6zM840.9 454.2h1.6v1.6h-1.6zM840.9 466.2h1.6v1.6h-1.6zM840.9 478.2h1.6v1.6h-1.6zM840.9 490.2h1.6v1.6h-1.6zM840.9 514.2h1.6v1.6h-1.6zM840.9 526.2h1.6v1.6h-1.6zM840.9 538.2h1.6v1.6h-1.6zM840.9 550.2h1.6v1.6h-1.6zM840.9 574.2h1.6v1.6h-1.6zM840.9 586.2h1.6v1.6h-1.6zM840.9 598.2h1.6v1.6h-1.6zM840.9 610.2h1.6v1.6h-1.6zM900.9 34.2h1.6v1.6h-1.6zM900.9 46.2h1.6v1.6h-1.6zM900.9 58.2h1.6v1.6h-1.6zM900.9 70.2h1.6v1.6h-1.6zM900.9 94.2h1.6v1.6h-1.6zM900.9 106.2h1.6v1.6h-1.6zM900.9 118.2h1.6v1.6h-1.6zM900.9 130.2h1.6v1.6h-1.6zM900.9 154.2h1.6v1.6h-1.6zM900.9 166.2h1.6v1.6h-1.6zM900.9 178.2h1.6v1.6h-1.6zM900.9 190.2h1.6v1.6h-1.6zM900.9 214.2h1.6v1.6h-1.6zM900.9 226.2h1.6v1.6h-1.6zM900.9 238.2h1.6v1.6h-1.6zM900.9 250.2h1.6v1.6h-1.6zM900.9 274.2h1.6v1.6h-1.6zM900.9 286.2h1.6v1.6h-1.6zM900.9 298.2h1.6v1.6h-1.6zM900.9 310.2h1.6v1.6h-1.6zM900.9 334.2h1.6v1.6h-1.6zM900.9 346.2h1.6v1.6h-1.6zM900.9 358.2h1.6v1.6h-1.6zM900.9 370.2h1.6v1.6h-1.6zM900.9 394.2h1.6v1.6h-1.6zM900.9 406.2h1.6v1.6h-1.6zM900.9 418.2h1.6v1.6h-1.6zM900.9 430.2h1.6v1.6h-1.6zM900.9 454.2h1.6v1.6h-1.6zM900.9 466.2h1.6v1.6h-1.6zM900.9 478.2h1.6v1.6h-1.6zM900.9 490.2h1.6v1.6h-1.6zM900.9 514.2h1.6v1.6h-1.6zM900.9 526.2h1.6v1.6h-1.6zM900.9 538.2h1.6v1.6h-1.6zM900.9 550.2h1.6v1.6h-1.6zM900.9 574.2h1.6v1.6h-1.6zM900.9 586.2h1.6v1.6h-1.6zM900.9 598.2h1.6v1.6h-1.6zM900.9 610.2h1.6v1.6h-1.6z" fill="#8c8c8c"/>
<path d="M24.9 321.0h1.6v4h-1.6zM36.9 321.0h1.6v4h-1.6zM48.9 321.0h1.6v4h-1.6zM60.9 321.0h1.6v4h-1.6zM72.9 321.0h1.6v4h-1.6zM84.9 321.0h1.6v4h-1.6zM96.9 321.0h1.6v4h-1.6zM108.9 321.0h1.6v4h-1.6zM120.9 321.0h1.6v4h-1.6zM132.9 321.0h1.6v4h-1.6zM144.9 321.0h1.6v4h-1.6zM156.9 321.0h1.6v4h-1.6zM168.9 321.0h1.6v4h-1.6zM180.9 321.0h1.6v4h-1.6zM192.9 321.0h1.6v4h-1.6zM204.9 321.0h1.6v4h-1.6zM216.9 321.0h1.6v4h-1.6zM228.9 321.0h1.6v4h-1.6zM240.9 321.0h1.6v4h-1.6zM252.9 321.0h1.6v4h-1.6zM264.9 321.0h1.6v4h-1.6zM276.9 321.0h1.6v4h-1.6zM288.9 321.0h1.6v4h-1.6zM300.9 321.0h1.6v4h-1.6zM312.9 321.0h1.6v4h-1.6zM324.9 321.0h1.6v4h-1.6zM336.9 321.0h1.6v4h-1.6zM348.9 321.0h1.6v4h-1.6zM360.9 321.0h1.6v4h-1.6zM372.9 321.0h1.6v4h-1.6zM384.9 321.0h1.6v4h-1.6zM396.9 321.0h1.6v4h-1.6zM408.9 321.0h1.6v4h-1.6zM420.9 321.0h1.6v4h-1.6zM432.9 321.0h1.6v4h-1.6zM444.9 321.0h1.6v4h-1.6zM456.9 321.0h1.6v4h-1.6zM468.9 321.0h1.6v4h-1.6zM480.9 321.0h1.6v4h-1.6zM492.9 321.0h1.6v4h-1.6zM504.9 321.0h1.6v4h-1.6zM516.9 321.0h1.6v4h-1.6zM528.9 321.0h1.6v4h-1.6zM540.9 321.0h1.6v4h-1.6zM552.9 321.0h1.6v4h-1.6zM564.9 321.0h1.6v4h-1.6zM576.9 321.0h1.6v4h-1.6zM588.9 321.0h1.6v4h-1.6zM600.9 321.0h1.6v4h-1.6zM612.9 321.0h1.6v4h-1.6zM624.9 321.0h1.6v4h-1.6zM636.9 321.0h1.6v4h-1.6zM648.9 321.0h1.6v4h-1.6zM660.9 321.0h1.6v4h-1.6zM672.9 321.0h1.6v4h-1.6zM684.9 321.0h1.6v4h-1.6zM696.9 321.0h1.6v4h-1.6zM708.9 321.0h1.6v4h-1.6zM720.9 321.0h1.6v4h-1.6zM732.9 321.0h1.6v4h-1.6zM744.9 321.0h1.6v4h-1.6zM756.9 321.0h1.6v4h-1.6zM768.9 321.0h1.6v4h-1.6zM780.9 321.0h1.6v4h-1.6zM792.9 321.0h1.6v4h-1.6zM804.9 321.0h1.6v4h-1.6zM816.9 321.0h1.6v4h-1.6zM828.9 321.0h1.6v4h-1.6zM840.9 321.0h1.6v4h-1.6zM852.9 321.0h1.6v4h-1.6zM864.9 321.0h1.6v4h-1.6zM876.9 321.0h1.6v4h-1.6zM888.9 321.0h1.6v4h-1.6zM900.9 321.0h1.6v4h-1.6zM912.9 321.0h1.6v4h-1.6zM924.9 321.0h1.6v4h-1.6zM479.7 34.2h4v1.6h-4zM479.7 46.2h4v1.6h-4zM479.7 58.2h4v1.6h-4zM479.7 70.2h4v1.6h-4zM479.7 82.2h4v1.6h-4zM479.7 94.2h4v1.6h-4zM479.7 106.2h4v1.6h-4zM479.7 118.2h4v1.6h-4zM479.7 130.2h4v1.6h-4zM479.7 142.2h4v1.6h-4zM479.7 154.2h4v1.6h-4zM479.7 166.2h4v1.6h-4zM479.7 178.2h4v1.6h-4zM479.7 190.2h4v1.6h-4zM479.7 202.2h4v1.6h-4zM479.7 214.2h4v1.6h-4zM479.7 226.2h4v1.6h-4zM479.7 238.2h4v1.6h-4zM479.7 250.2h4v1.6h-4zM479.7 262.2h4v1.6h-4zM479.7 274.2h4v1.6h-4zM479.7 286.2h4v1.6h-4zM479.7 298.2h4v1.6h-4zM479.7 310.2h4v1.6h-4zM479.7 322.2h4v1.6h-4zM479.7 334.2h4v1.6h-4zM479.7 346.2h4v1.6h-4zM479.7 358.2h4v1.6h-4zM479.7 370.2h4v1.6h-4zM479.7 382.2h4v1.6h-4zM479.7 394.2h4v1.6h-4zM479.7 406.2h4v1.6h-4zM479.7 418.2h4v1.6h-4zM479.7 430.2h4v1.6h-4zM479.7 442.2h4v1.6h-4zM479.7 454.2h4v1.6h-4zM479.7 466.2h4v1.6h-4zM479.7 478.2h4v1.6h-4zM479.7 490.2h4v1.6h-4zM479.7 502.2h4v1.6h-4zM479.7 514.2h4v1.6h-4zM479.7 526.2h4v1.6h-4zM479.7 538.2h4v1.6h-4zM479.7 550.2h4v1.6h-4zM479.7 562.2h4v1.6h-4zM479.7 574.2h4v1.6h-4zM479.7 586.2h4v1.6h-4zM479.7 598.2h4v1.6h-4zM479.7 610.2h4v1.6h-4z" fill="#d8d8d8"/>
<path d="M25.0 25h1.4v2.5h-1.4zM25.0 618.5h1.4v2.5h-1.4zM37.0 25h1.4v2.5h-1.4zM37.0 618.5h1.4v2.5h-1.4zM49.0 25h1.4v2.5h-1.4zM49.0 618.5h1.4v2.5h-1.4zM61.0 25h1.4v6.0h-1.4zM61.0 615.0h1.4v6.0h-1.4zM73.0 25h1.4v2.5h-1.4zM73.0 618.5h1.4v2.5h-1.4zM85.0 25h1.4v2.5h-1.4zM85.0 618.5h1.4v2.5h-1.4zM97.0 25h1.4v2.5h-1.4zM97.0 618.5h1.4v2.5h-1.4zM109.0 25h1.4v2.5h-1.4zM109.0 618.5h1.4v2.5h-1.4zM121.0 25h1.4v6.0h-1.4zM121.0 615.0h1.4v6.0h-1.4zM133.0 25h1.4v2.5h-1.4zM133.0 618.5h1.4v2.5h-1.4zM145.0 25h1.4v2.5h-1.4zM145.0 618.5h1.4v2.5h-1.4zM157.0 25h1.4v2.5h-1.4zM157.0 618.5h1.4v2.5h-1.4zM169.0 25h1.4v2.5h-1.4zM169.0 618.5h1.4v2.5h-1.4zM181.0 25h1.4v6.0h-1.4zM181.0 615.0h1.4v6.0h-1.4zM193.0 25h1.4v2.5h-1.4zM193.0 618.5h1.4v2.5h-1.4zM205.0 25h1.4v2.5h-1.4zM205.0 618.5h1.4v2.5h-1.4zM217.0 25h1.4v2.5h-1.4zM217.0 618.5h1.4v2.5h-1.4zM229.0 25h1.4v2.5h-1.4zM229.0 618.5h1.4v2.5h-1.4zM241.0 25h1.4v6.0h-1.4zM241.0 615.0h1.4v6.0h-1.4zM253.0 25h1.4v2.5h-1.4zM253.0 618.5h1.4v2.5h-1.4zM265.0 25h1.4v2.5h-1.4zM265.0 618.5h1.4v2.5h-1.4zM277.0 25h1.4v2.5h-1.4zM277.0 618.5h1.4v2.5h-1.4zM289.0 25h1.4v2.5h-1.4zM289.0 618.5h1.4v2.5h-1.4zM301.0 25h1.4v6.0h-1.4zM301.0 615.0h1.4v6.0h-1.4zM313.0 25h1.4v2.5h-1.4zM313.0 618.5h1.4v2.5h-1.4zM325.0 25h1.4v2.5h-1.4zM325.0 618.5h1.4v2.5h-1.4zM337.0 25h1.4v2.5h-1.4zM337.0 618.5h1.4v2.5h-1.4zM349.0 25h1.4v2.5h-1.4zM349.0 618.5h1.4v2.5h-1.4zM361.0 25h1.4v6.0h-1.4zM361.0 615.0h1.4v6.0h-1.4zM373.0 25h1.4v2.5h-1.4zM373.0 618.5h1.4v2.5h-1.4zM385.0 25h1.4v2.5h-1.4zM385.0 618.5h1.4v2.5h-1.4zM397.0 25h1.4v2.5h-1.4zM397.0 618.5h1.4v2.5h-1.4zM409.0 25h1.4v2.5h-1.4zM409.0 618.5h1.4v2.5h-1.4zM421.0 25h1.4v6.0h-1.4zM421.0 615.0h1.4v6.0h-1.4zM433.0 25h1.4v2.5h-1.4zM433.0 618.5h1.4v2.5h-1.4zM445.0 25h1.4v2.5h-1.4zM445.0 618.5h1.4v2.5h-1.4zM457.0 25h1.4v2.5h-1.4zM457.0 618.5h1.4v2.5h-1.4zM469.0 25h1.4v2.5h-1.4zM469.0 618.5h1.4v2.5h-1.4zM481.0 25h1.4v6.0h-1.4zM481.0 615.0h1.4v6.0h-1.4zM493.0 25h1.4v2.5h-1.4zM493.0 618.5h1.4v2.5h-1.4zM505.0 25h1.4v2.5h-1.4zM505.0 618.5h1.4v2.5h-1.4zM517.0 25h1.4v2.5h-1.4zM517.0 618.5h1.4v2.5h-1.4zM529.0 25h1.4v2.5h-1.4zM529.0 618.5h1.4v2.5h-1.4zM541.0 25h1.4v6.0h-1.4zM541.0 615.0h1.4v6.0h-1.4zM553.0 25h1.4v2.5h-1.4zM553.0 618.5h1.4v2.5h-1.4zM565.0 25h1.4v2.5h-1.4zM565.0 618.5h1.4v2.5h-1.4zM577.0 25h1.4v2.5h-1.4zM577.0 618.5h1.4v2.5h-1.4zM589.0 25h1.4v2.5h-1.4zM589.0 618.5h1.4v2.5h-1.4zM601.0 25h1.4v6.0h-1.4zM601.0 615.0h1.4v6.0h-1.4zM613.0 25h1.4v2.5h-1.4zM613.0 618.5h1.4v2.5h-1.4zM625.0 25h1.4v2.5h-1.4zM625.0 618.5h1.4v2.5h-1.4zM637.0 25h1.4v2.5h-1.4zM637.0 618.5h1.4v2.5h-1.4zM649.0 25h1.4v2.5h-1.4zM649.0 618.5h1.4v2.5h-1.4zM661.0 25h1.4v6.0h-1.4zM661.0 615.0h1.4v6.0h-1.4zM673.0 25h1.4v2.5h-1.4zM673.0 618.5h1.4v2.5h-1.4zM685.0 25h1.4v2.5h-1.4zM685.0 618.5h1.4v2.5h-1.4zM697.0 25h1.4v2.5h-1.4zM697.0 618.5h1.4v2.5h-1.4zM709.0 25h1.4v2.5h-1.4zM709.0 618.5h1.4v2.5h-1.4zM721.0 25h1.4v6.0h-1.4zM721.0 615.0h1.4v6.0h-1.4zM733.0 25h1.4v2.5h-1.4zM733.0 618.5h1.4v2.5h-1.4zM745.0 25h1.4v2.5h-1.4zM745.0 618.5h1.4v2.5h-1.4zM757.0 25h1.4v2.5h-1.4zM757.0 618.5h1.4v2.5h-1.4zM769.0 25h1.4v2.5h-1.4zM769.0 618.5h1.4v2.5h-1.4zM781.0 25h1.4v6.0h-1.4zM781.0 615.0h1.4v6.0h-1.4zM793.0 25h1.4v2.5h-1.4zM793.0 618.5h1.4v2.5h-1.4zM805.0 25h1.4v2.5h-1.4zM805.0 618.5h1.4v2.5h-1.4zM817.0 25h1.4v2.5h-1.4zM817.0 618.5h1.4v2.5h-1.4zM829.0 25h1.4v2.5h-1.4zM829.0 618.5h1.4v2.5h-1.4zM841.0 25h1.4v6.0h-1.4zM841.0 615.0h1.4v6.0h-1.4zM853.0 25h1.4v2.5h-1.4zM853.0 618.5h1.4v2.5h-1.4zM865.0 25h1.4v2.5h-1.4zM865.0 618.5h1.4v2.5h-1.4zM877.0 25h1.4v2.5h-1.4zM877.0 618.5h1.4v2.5h-1.4zM889.0 25h1.4v2.5h-1.4zM889.0 618.5h1.4v2.5h-1.4zM901.0 25h1.4v6.0h-1.4zM901.0 615.0h1.4v6.0h-1.4zM913.0 25h1.4v2.5h-1.4zM913.0 618.5h1.4v2.5h-1.4zM925.0 25h1.4v2.5h-1.4zM925.0 618.5h1.4v2.5h-1.4zM26 34.3h4v1.4h-4zM930 34.3h4v1.4h-4zM26 46.3h4v1.4h-4zM930 46.3h4v1.4h-4zM26 58.3h4v1.4h-4zM930 58.3h4v1.4h-4zM26 70.3h4v1.4h-4zM930 70.3h4v1.4h-4zM26 82.3h7v1.4h-7zM927 82.3h7v1.4h-7zM26 94.3h4v1.4h-4zM930 94.3h4v1.4h-4zM26 106.3h4v1.4h-4zM930 106.3h4v1.4h-4zM26 118.3h4v1.4h-4zM930 118.3h4v1.4h-4zM26 130.3h4v1.4h-4zM930 130.3h4v1.4h-4zM26 142.3h7v1.4h-7zM927 142.3h7v1.4h-7zM26 154.3h4v1.4h-4zM930 154.3h4v1.4h-4zM26 166.3h4v1.4h-4zM930 166.3h4v1.4h-4zM26 178.3h4v1.4h-4zM930 178.3h4v1.4h-4zM26 190.3h4v1.4h-4zM930 190.3h4v1.4h-4zM26 202.3h7v1.4h-7zM927 202.3h7v1.4h-7zM26 214.3h4v1.4h-4zM930 214.3h4v1.4h-4zM26 226.3h4v1.4h-4zM930 226.3h4v1.4h-4zM26 238.3h4v1.4h-4zM930 238.3h4v1.4h-4zM26 250.3h4v1.4h-4zM930 250.3h4v1.4h-4zM26 262.3h7v1.4h-7zM927 262.3h7v1.4h-7zM26 274.3h4v1.4h-4zM930 274.3h4v1.4h-4zM26 286.3h4v1.4h-4zM930 286.3h4v1.4h-4zM26 298.3h4v1.4h-4zM930 298.3h4v1.4h-4zM26 310.3h4v1.4h-4zM930 310.3h4v1.4h-4zM26 322.3h7v1.4h-7zM927 322.3h7v1.4h-7zM26 334.3h4v1.4h-4zM930 334.3h4v1.4h-4zM26 346.3h4v1.4h-4zM930 346.3h4v1.4h-4zM26 358.3h4v1.4h-4zM930 358.3h4v1.4h-4zM26 370.3h4v1.4h-4zM930 370.3h4v1.4h-4zM26 382.3h7v1.4h-7zM927 382.3h7v1.4h-7zM26 394.3h4v1.4h-4zM930 394.3h4v1.4h-4zM26 406.3h4v1.4h-4zM930 406.3h4v1.4h-4zM26 418.3h4v1.4h-4zM930 418.3h4v1.4h-4zM26 430.3h4v1.4h-4zM930 430.3h4v1.4h-4zM26 442.3h7v1.4h-7zM927 442.3h7v1.4h-7zM26 454.3h4v1.4h-4zM930 454.3h4v1.4h-4zM26 466.3h4v1.4h-4zM930 466.3h4v1.4h-4zM26 478.3h4v1.4h-4zM930 478.3h4v1.4h-4zM26 490.3h4v1.4h-4zM930 490.3h4v1.4h-4zM26 502.3h7v1.4h-7zM927 502.3h7v1.4h-7zM26 514.3h4v1.4h-4zM930 514.3h4v1.4h-4zM26 526.3h4v1.4h-4zM930 526.3h4v1.4h-4zM26 538.3h4v1.4h-4zM930 538.3h4v1.4h-4zM26 550.3h4v1.4h-4zM930 550.3h4v1.4h-4zM26 562.3h7v1.4h-7zM927 562.3h7v1.4h-7zM26 574.3h4v1.4h-4zM930 574.3h4v1.4h-4zM26 586.3h4v1.4h-4zM930 586.3h4v1.4h-4zM26 598.3h4v1.4h-4zM930 598.3h4v1.4h-4zM26 610.3h4v1.4h-4zM930 610.3h4v1.4h-4z" fill="#d0d0d0"/>
<path d="M26 153.2H934M26 174.6H934" stroke="#a020c0" stroke-width="1.6" stroke-dasharray="5 1 2 1" opacity="0.9"/>
<path d="M26 324H309V327.6H26zM312 149.5H530V155H312zM531 171.6H778V178.6H531zM778 170H829V176.6H778zM828.5 323.8H934V327.8H828.5zM903 304H905V325H903z" fill="#f4f418"/>
<path d="M307.8 327.5L310 327.5L313.2 150L311 150zM529.5 150L531.5 150L533.5 176L531.5 176zM827.8 170H830V327.5H827.8z" fill="#d8d834"/>
<path d="M26.0 322.5h2.0v1.5h-2.0zM28.0 321.5h1.0v2.5h-1.0zM35.0 322.0h2.0v2.0h-2.0zM37.0 321.5h2.0v2.5h-2.0zM48.0 322.5h1.0v1.5h-1.0zM51.0 322.5h3.0v1.5h-3.0zM56.0 321.5h1.5v2.5h-1.5zM60.0 321.5h1.0v2.5h-1.0zM82.0 322.5h1.5v1.5h-1.5zM85.0 322.0h3.0v2.0h-3.0zM95.0 323.0h1.0v1.0h-1.0zM100.0 322.0h1.5v2.0h-1.5zM105.0 321.5h1.0v2.5h-1.0zM109.0 322.0h3.0v2.0h-3.0zM119.0 323.0h2.0v1.0h-2.0zM126.0 321.5h2.0v2.5h-2.0zM131.0 322.0h2.0v2.0h-2.0zM137.0 323.0h2.0v1.0h-2.0zM139.0 322.0h1.5v2.0h-1.5zM142.0 322.0h1.0v2.0h-1.0zM145.0 321.5h2.0v2.5h-2.0zM164.0 322.5h1.5v1.5h-1.5zM167.0 321.5h1.5v2.5h-1.5zM171.0 322.5h2.0v1.5h-2.0zM181.0 321.5h3.0v2.5h-3.0zM186.0 322.0h1.0v2.0h-1.0zM193.0 322.5h2.0v1.5h-2.0zM196.0 321.5h1.0v2.5h-1.0zM198.0 322.5h3.0v1.5h-3.0zM202.0 322.5h3.0v1.5h-3.0zM207.0 322.0h2.0v2.0h-2.0zM211.0 323.0h2.0v1.0h-2.0zM216.0 322.0h1.0v2.0h-1.0zM219.0 322.0h2.0v2.0h-2.0zM227.0 322.5h3.0v1.5h-3.0zM231.0 321.5h1.0v2.5h-1.0zM241.0 322.5h2.0v1.5h-2.0zM244.0 321.5h2.0v2.5h-2.0zM258.0 322.0h2.0v2.0h-2.0zM264.0 322.5h3.0v1.5h-3.0zM268.0 321.5h2.0v2.5h-2.0zM272.0 323.0h1.5v1.0h-1.5zM277.0 322.5h2.0v1.5h-2.0zM279.0 321.5h2.0v2.5h-2.0zM286.0 322.5h2.0v1.5h-2.0zM290.0 321.5h2.0v2.5h-2.0zM295.0 323.0h1.5v1.0h-1.5zM300.0 322.0h1.5v2.0h-1.5zM314.0 147.0h1.5v2.5h-1.5zM316.0 147.0h1.0v2.5h-1.0zM319.0 148.0h1.5v1.5h-1.5zM321.0 147.5h3.0v2.0h-3.0zM328.0 147.5h1.5v2.0h-1.5zM342.0 147.0h3.0v2.5h-3.0zM350.0 147.5h3.0v2.0h-3.0zM365.0 147.5h1.0v2.0h-1.0zM367.0 147.0h1.0v2.5h-1.0zM369.0 147.0h3.0v2.5h-3.0zM377.0 147.5h3.0v2.0h-3.0zM390.0 147.5h2.0v2.0h-2.0zM394.0 148.0h2.0v1.5h-2.0zM396.0 147.5h1.0v2.0h-1.0zM403.0 148.0h2.0v1.5h-2.0zM408.0 147.5h1.5v2.0h-1.5zM411.0 147.5h3.0v2.0h-3.0zM416.0 148.0h2.0v1.5h-2.0zM420.0 147.5h1.0v2.0h-1.0zM434.0 147.0h2.0v2.5h-2.0zM436.0 148.0h1.0v1.5h-1.0zM438.0 148.5h1.5v1.0h-1.5zM451.0 147.0h3.0v2.5h-3.0zM458.0 147.0h1.5v2.5h-1.5zM474.0 148.5h2.0v1.0h-2.0zM476.0 147.0h2.0v2.5h-2.0zM482.0 148.0h1.0v1.5h-1.0zM485.0 148.0h1.5v1.5h-1.5zM492.0 147.0h1.5v2.5h-1.5zM496.0 148.5h2.0v1.0h-2.0zM498.0 147.0h3.0v2.5h-3.0zM501.0 148.0h2.0v1.5h-2.0zM520.0 147.0h1.5v2.5h-1.5zM495.0 147.0h2.0v2.5h-2.0zM500.0 148.5h2.0v1.0h-2.0zM504.0 147.0h2.0v2.5h-2.0zM506.0 148.0h2.0v1.5h-2.0zM511.0 147.5h2.0v2.0h-2.0zM515.0 147.5h1.5v2.0h-1.5zM519.0 147.5h2.0v2.0h-2.0zM521.0 147.0h1.5v2.5h-1.5zM524.0 148.5h1.0v1.0h-1.0zM542.0 178.6h1.5v2.5h-1.5zM552.0 178.6h3.0v1.5h-3.0zM555.0 178.6h3.0v1.5h-3.0zM568.0 178.6h1.5v1.0h-1.5zM595.0 178.6h2.0v1.0h-2.0zM601.0 178.6h2.0v1.5h-2.0zM615.0 178.6h2.0v1.5h-2.0zM626.0 178.6h2.0v1.0h-2.0zM637.0 178.6h2.0v2.5h-2.0zM651.0 178.6h3.0v1.0h-3.0zM661.0 178.6h1.0v1.5h-1.0zM663.0 178.6h2.0v2.5h-2.0zM667.0 178.6h3.0v1.5h-3.0zM675.0 178.6h2.0v2.0h-2.0zM677.0 178.6h2.0v2.0h-2.0zM694.0 178.6h2.0v2.0h-2.0zM703.0 178.6h2.0v1.0h-2.0zM717.0 178.6h2.0v1.0h-2.0zM720.0 178.6h2.0v2.0h-2.0zM724.0 178.6h2.0v2.0h-2.0zM751.0 178.6h2.0v2.0h-2.0zM755.0 178.6h2.0v1.5h-2.0zM769.0 178.6h1.5v1.5h-1.5zM771.0 178.6h3.0v2.0h-3.0zM787.0 176.6h2.0v1.5h-2.0zM793.0 176.6h1.5v2.5h-1.5zM812.0 176.6h1.5v2.0h-1.5zM815.0 176.6h2.0v1.5h-2.0zM780.0 168.0h2.0v2.0h-2.0zM785.0 168.0h3.0v2.0h-3.0zM796.0 167.5h1.0v2.5h-1.0zM801.0 169.0h1.0v1.0h-1.0zM804.0 169.0h2.0v1.0h-2.0zM814.0 168.0h3.0v2.0h-3.0zM817.0 168.5h3.0v1.5h-3.0zM819.0 168.0h2.0v2.0h-2.0zM831.0 322.5h3.0v1.5h-3.0zM834.0 322.0h2.0v2.0h-2.0zM836.0 322.0h2.0v2.0h-2.0zM838.0 321.5h2.0v2.5h-2.0zM842.0 323.0h2.0v1.0h-2.0zM847.0 322.0h1.5v2.0h-1.5zM851.0 322.5h2.0v1.5h-2.0zM854.0 322.5h2.0v1.5h-2.0zM858.0 321.5h2.0v2.5h-2.0zM866.0 321.5h1.0v2.5h-1.0zM871.0 321.5h1.5v2.5h-1.5zM876.0 323.0h1.5v1.0h-1.5zM881.0 321.5h2.0v2.5h-2.0zM886.0 322.5h3.0v1.5h-3.0zM891.0 321.5h2.0v2.5h-2.0zM900.0 323.0h1.0v1.0h-1.0zM904.0 322.0h1.0v2.0h-1.0zM907.0 322.0h2.0v2.0h-2.0zM909.0 322.0h1.5v2.0h-1.5zM913.0 322.0h1.5v2.0h-1.5zM917.0 322.0h1.0v2.0h-1.0zM922.0 321.5h2.0v2.5h-2.0zM924.0 322.0h1.0v2.0h-1.0zM926.0 321.5h1.0v2.5h-1.0zM930.0 322.0h3.0v2.0h-3.0zM932.0 321.5h2.0v2.5h-2.0z" fill="#f0f018"/>
<path d="M26 153.2H934M26 174.6H934" stroke="#a020c0" stroke-width="1.6" stroke-dasharray="5 1 2 1" opacity="0.4"/>
<path d="M774.7 323.5H788.6M781.7 316.7V330.3" stroke="#e8e8e8" stroke-width="1.6"/>
<path d="M0.8 316.2H17L23 326.4L17 336.6H0.8z" fill="#000" stroke="#e0ec30" stroke-width="1.6"/>
<text x="3.6" y="332.6" font-family="Liberation Mono" font-size="19" letter-spacing="0" fill="#e8e830" xml:space="preserve">2</text>
<path d="M344.3 359.5V158" stroke="#fff" stroke-width="5" fill="none"/>
<path d="M337 167L344.3 157.5L351.6 167" stroke="#fff" stroke-width="4.5" fill="none" stroke-linecap="round"/>
<path d="M656.3 374.5V181" stroke="#fff" stroke-width="5" fill="none"/>
<path d="M649 190L656.3 180.5L663.6 190" stroke="#fff" stroke-width="4.5" fill="none" stroke-linecap="round"/>
<text x="202" y="389.5" font-family="Liberation Sans" font-weight="bold" font-size="23" fill="#fff">Setting = 50W, High</text>
<text x="202" y="421.5" font-family="Liberation Sans" font-weight="bold" font-size="23" fill="#fff" textLength="286">.5 Ohms @ 5.76V = 66.4W</text>
<text x="571" y="405.5" font-family="Liberation Sans" font-weight="bold" font-size="23" fill="#fff" textLength="285">.5 Ohms @ 5.04V = 50.8W</text>
<rect x="31" y="540" width="224" height="82" rx="5" fill="#000" stroke="#70a8c8" stroke-width="1.8"/>
<circle cx="42.6" cy="551" r="9.2" fill="#e8e820"/><text x="36.9" y="557.3" font-family="Liberation Mono" font-size="19" letter-spacing="0" fill="#000" stroke="#000" stroke-width="0.5" xml:space="preserve">2</text>
<path d="M54 557l4.7-6l4.7 6z" fill="none" stroke="#d8d8d8" stroke-width="1.3"/>
<text x="63.5" y="559.5" font-family="Liberation Mono" font-size="18" letter-spacing="1.35" fill="#f2f2f2" stroke="#000" stroke-width="0.2" xml:space="preserve">y:720.0mv</text>
<text x="50.5" y="585.7" font-family="Liberation Mono" font-size="18" letter-spacing="1.35" fill="#f2f2f2" stroke="#000" stroke-width="0.2" xml:space="preserve">y1:5.04v</text>
<text x="50.5" y="611.7" font-family="Liberation Mono" font-size="18" letter-spacing="1.35" fill="#f2f2f2" stroke="#000" stroke-width="0.2" xml:space="preserve">y2:5.76v</text>
<rect x="0" y="623.2" width="383" height="96.8" fill="#5aaad0"/>
<rect x="1.2" y="624.3" width="248.8" height="22" rx="4.5" fill="#000" stroke="#78b8d0" stroke-width="0.8"/>
<rect x="1.2" y="647.3" width="248.8" height="23" rx="4.5" fill="#000" stroke="#78b8d0" stroke-width="0.8"/>
<rect x="252.8" y="624.3" width="127" height="46" rx="4.5" fill="#000" stroke="#78b8d0" stroke-width="0.8"/>
<rect x="1.2" y="672.9" width="379.3" height="44" rx="4.5" fill="#000" stroke="#78b8d0" stroke-width="0.8"/>
<circle cx="11.9" cy="636.7" r="9.2" fill="#e81010"/><text x="6.2" y="643.0" font-family="Liberation Mono" font-size="19" letter-spacing="0" fill="#300000" stroke="#300000" stroke-width="0.5" xml:space="preserve">1</text>
<text x="21" y="643.25" font-family="Liberation Mono" font-size="18" letter-spacing="1.35" fill="#d81818" stroke="#000" stroke-width="0.2" xml:space="preserve">5V-</text>
<text x="126" y="643.25" font-family="Liberation Mono" font-size="18" letter-spacing="1.35" fill="#d81818" stroke="#000" stroke-width="0.2" xml:space="preserve">0.00div</text>
<circle cx="11.9" cy="659.8" r="9.2" fill="#e8e820"/><text x="6.2" y="666.0999999999999" font-family="Liberation Mono" font-size="19" letter-spacing="0" fill="#000" stroke="#000" stroke-width="0.5" xml:space="preserve">2</text>
<text x="21" y="667.1" font-family="Liberation Mono" font-size="18" letter-spacing="1.35" fill="#e4e440" stroke="#000" stroke-width="0.2" xml:space="preserve">2V-</text>
<text x="126" y="667.1" font-family="Liberation Mono" font-size="18" letter-spacing="1.35" fill="#e4e440" stroke="#000" stroke-width="0.2" xml:space="preserve">-0.04div</text>
<text x="257.5" y="641.35" font-family="Liberation Mono" font-size="18" letter-spacing="1.35" fill="#f2f2f2" stroke="#000" stroke-width="0.2" xml:space="preserve">(1.25KS/s)</text>
<text x="260.5" y="665" font-family="Liberation Mono" font-size="18" letter-spacing="1.35" fill="#f2f2f2" stroke="#000" stroke-width="0.2" xml:space="preserve">Depth:10K</text>
<circle cx="11.5" cy="684.8" r="9.2" fill="#e8e820"/><text x="5.8" y="691.0999999999999" font-family="Liberation Mono" font-size="19" letter-spacing="0" fill="#000" stroke="#000" stroke-width="0.5" xml:space="preserve">2</text>
<text x="24.75" y="690.1" font-family="Liberation Mono" font-size="18" letter-spacing="1.35" fill="#e4e440" stroke="#000" stroke-width="0.2" xml:space="preserve">F:  ?</text>
<circle cx="11.5" cy="706.7" r="9.2" fill="#e8e820"/><text x="5.8" y="713.0" font-family="Liberation Mono" font-size="19" letter-spacing="0" fill="#000" stroke="#000" stroke-width="0.5" xml:space="preserve">2</text>
<text x="24.75" y="712.6" font-family="Liberation Mono" font-size="18" letter-spacing="1.35" fill="#e4e440" stroke="#000" stroke-width="0.2" xml:space="preserve">+D:1.5%</text>
<circle cx="201.8" cy="684.5" r="9.2" fill="#e8e820"/><text x="196.10000000000002" y="690.8" font-family="Liberation Mono" font-size="19" letter-spacing="0" fill="#000" stroke="#000" stroke-width="0.5" xml:space="preserve">2</text>
<text x="215.5" y="690" font-family="Liberation Mono" font-size="18" letter-spacing="1.35" fill="#e4e440" stroke="#000" stroke-width="0.2" xml:space="preserve">Vk:4.061v</text>
<circle cx="201.8" cy="706.7" r="9.2" fill="#e8e820"/><text x="196.10000000000002" y="713.0" font-family="Liberation Mono" font-size="19" letter-spacing="0" fill="#000" stroke="#000" stroke-width="0.5" xml:space="preserve">2</text>
<text x="215.5" y="712.6" font-family="Liberation Mono" font-size="18" letter-spacing="1.35" fill="#e4e440" stroke="#000" stroke-width="0.2" xml:space="preserve">V:3.060v</text>
<rect x="383" y="646" width="574" height="74" fill="#0562a4"/><rect x="383" y="646" width="4" height="74" fill="#0a70c8"/>
<rect x="383" y="623.8" width="119" height="20.7" rx="10.3" fill="#000"/>
<text x="398" y="641.25" font-family="Liberation Mono" font-size="18" letter-spacing="1.35" fill="#f2f2f2" stroke="#000" stroke-width="0.2" xml:space="preserve">M:400ms</text>
<rect x="797.5" y="623" width="154.5" height="21.7" rx="10.8" fill="#000"/>
<circle cx="810.5" cy="634.2" r="9.2" fill="#e81010"/><text x="804.8" y="640.5" font-family="Liberation Mono" font-size="19" letter-spacing="0" fill="#300000" stroke="#300000" stroke-width="0.5" xml:space="preserve">1</text>
<path d="M822.5 642.3H830.6L837.4 626.8H845.5" stroke="#e8e8e8" stroke-width="1.5" fill="none"/>
<text x="848.5" y="642" font-family="Liberation Mono" font-size="18" letter-spacing="1.35" fill="#f2f2f2" stroke="#000" stroke-width="0.2" xml:space="preserve">1.08v</text>
<rect x="387" y="649" width="107.5" height="65.5" rx="3" fill="#0080e0" stroke="#00509c" stroke-width="1.6"/><path d="M388 713.5V652a3 3 0 0 1 3-3H493.5" stroke="#44a4f4" stroke-width="1.6" fill="none"/>
<text x="415.5" y="674.4" font-family="Liberation Mono" font-size="18" letter-spacing="1.3" fill="#002a70" stroke="#002a70" stroke-width="0.45" xml:space="preserve">Type</text>
<rect x="409.5" y="685.3" width="59.5" height="23.7" fill="#e8e6e2"/>
<text x="410" y="703.1" font-family="Liberation Mono" font-size="18" letter-spacing="1.3" fill="#000" xml:space="preserve">Image</text>
<rect x="717" y="649" width="107" height="65.5" rx="3" fill="#0080e0" stroke="#00509c" stroke-width="1.6"/><path d="M718 713.5V652a3 3 0 0 1 3-3H823" stroke="#44a4f4" stroke-width="1.6" fill="none"/>
<text x="744" y="688.7" font-family="Liberation Mono" font-size="18" letter-spacing="1.3" fill="#002a70" stroke="#002a70" stroke-width="0.45" xml:space="preserve">Save</text>
</svg>
</body></html>
